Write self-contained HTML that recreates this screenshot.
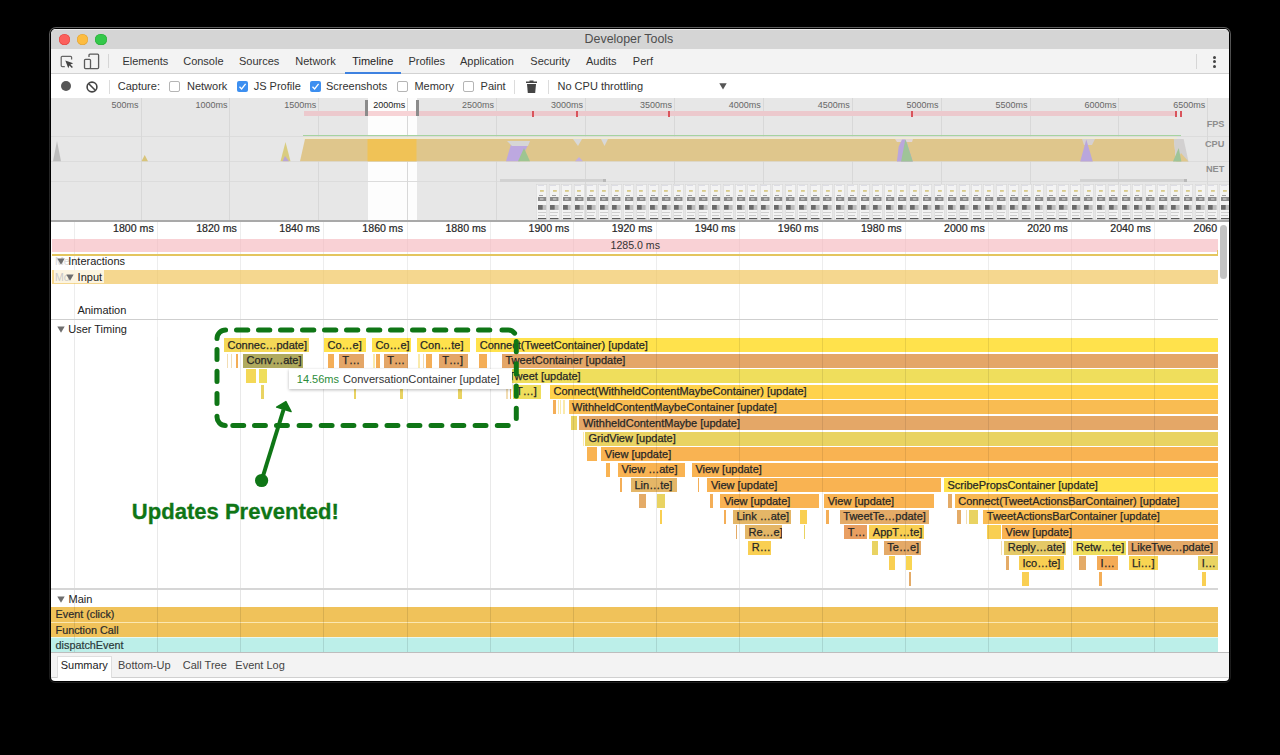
<!DOCTYPE html>
<html><head><meta charset="utf-8"><title>Developer Tools</title>
<style>
html,body{margin:0;padding:0;background:#000;}
body{width:1280px;height:755px;position:relative;overflow:hidden;font-family:"Liberation Sans", sans-serif;}
body div, body svg{position:absolute;}
.t{white-space:pre;}
.b{overflow:hidden;}
.b span{position:absolute;left:3.5px;top:1.6px;font-size:11px;line-height:11px;color:#262626;white-space:pre;-webkit-text-stroke:0.25px #262626;}
</style></head><body>
<div style="left:49px;top:27px;width:1182px;height:656px;background:linear-gradient(#5e5e5e 0,#4a4a4a 5%,#262626 14%,#1c1c1c 100%);border-radius:7px 7px 6px 6px"></div>
<div style="left:50px;top:28px;width:1180px;height:654px;background:#000;border-radius:6px 6px 5px 5px"></div>
<div style="left:51px;top:29px;width:1178px;height:652px;background:#fff;border-radius:5px 5px 4px 4px;overflow:hidden"><div style="left:0;top:0;width:100%;height:20px;background:#d5d5d5;border-top:1px solid #ececec;box-sizing:border-box"></div></div>
<div style="left:58.70px;top:33.80px;width:11.4px;height:11.4px;border-radius:50%;background:#fc605c;box-shadow:inset 0 0 0 0.5px #e0443e"></div>
<div style="left:76.90px;top:33.80px;width:11.4px;height:11.4px;border-radius:50%;background:#fdbc40;box-shadow:inset 0 0 0 0.5px #dea236"></div>
<div style="left:95.40px;top:33.80px;width:11.4px;height:11.4px;border-radius:50%;background:#34c84a;box-shadow:inset 0 0 0 0.5px #27aa35"></div>
<div class="t" style="left:584.60px;top:33.26px;font-size:12.4px;line-height:12.4px;color:#4d4d4d;">Developer Tools</div>
<div style="left:51.00px;top:49.00px;width:1178.00px;height:24.00px;background:#f3f3f3;"></div>
<div style="left:51.00px;top:73.00px;width:1178.00px;height:1.30px;background:#d2d2d2;"></div>
<svg style="left:59px;top:54px" width="16" height="16" viewBox="0 0 16 16"><path d="M5.8 12.6H3.2C2.6 12.6 2.2 12.2 2.2 11.6V3.3C2.2 2.7 2.6 2.3 3.2 2.3H11.6C12.2 2.3 12.6 2.7 12.6 3.3V5.6" fill="none" stroke="#666" stroke-width="1.25"/><path d="M6.3 6.6L14.2 9.3L11.4 10.4L13.9 12.9L12.9 13.9L10.4 11.4L9.3 14.2Z" fill="#444"/></svg>
<svg style="left:83px;top:53px" width="17" height="17" viewBox="0 0 17 17"><path d="M6 4V2.2C6 1.6 6.4 1.2 7 1.2H14.6C15.2 1.2 15.6 1.6 15.6 2.2V14.6C15.6 15.2 15.2 15.6 14.6 15.6H7" fill="none" stroke="#5a5a5a" stroke-width="1.3"/><rect x="1.5" y="6.3" width="6" height="9.3" rx="1" fill="none" stroke="#5a5a5a" stroke-width="1.3"/></svg>
<div style="left:108.30px;top:54.00px;width:1.00px;height:14.00px;background:#d6d6d6;"></div>
<div class="t" style="left:122.40px;top:55.95px;font-size:11px;line-height:11px;color:#333;">Elements</div>
<div class="t" style="left:183.20px;top:55.95px;font-size:11px;line-height:11px;color:#333;">Console</div>
<div class="t" style="left:239.00px;top:55.95px;font-size:11px;line-height:11px;color:#333;">Sources</div>
<div class="t" style="left:295.30px;top:55.95px;font-size:11px;line-height:11px;color:#333;">Network</div>
<div class="t" style="left:352.20px;top:55.95px;font-size:11px;line-height:11px;color:#222;">Timeline</div>
<div class="t" style="left:408.40px;top:55.95px;font-size:11px;line-height:11px;color:#333;">Profiles</div>
<div class="t" style="left:460.00px;top:55.95px;font-size:11px;line-height:11px;color:#333;">Application</div>
<div class="t" style="left:530.30px;top:55.95px;font-size:11px;line-height:11px;color:#333;">Security</div>
<div class="t" style="left:586.00px;top:55.95px;font-size:11px;line-height:11px;color:#333;">Audits</div>
<div class="t" style="left:632.80px;top:55.95px;font-size:11px;line-height:11px;color:#333;">Perf</div>
<div style="left:344.70px;top:72.00px;width:56.30px;height:2.00px;background:#3e82e0;"></div>
<div style="left:1196.00px;top:54.00px;width:1.00px;height:15.00px;background:#d6d6d6;"></div>
<div style="left:1212.5px;top:55.9px;width:3px;height:3px;border-radius:50%;background:#444"></div>
<div style="left:1212.5px;top:60.4px;width:3px;height:3px;border-radius:50%;background:#444"></div>
<div style="left:1212.5px;top:64.9px;width:3px;height:3px;border-radius:50%;background:#444"></div>
<div style="left:60.6px;top:80.65px;width:10.8px;height:10.8px;border-radius:50%;background:#565656"></div>
<svg style="left:85.25px;top:79.65px" width="14" height="14" viewBox="0 0 14 14"><circle cx="7" cy="7" r="4.9" fill="none" stroke="#444" stroke-width="1.6"/><path d="M3.5 3.5L10.5 10.5" stroke="#444" stroke-width="1.6"/></svg>
<div style="left:108.50px;top:79.50px;width:1.00px;height:14.00px;background:#dcdcdc;"></div>
<div class="t" style="left:117.75px;top:80.95px;font-size:11px;line-height:11px;color:#333;">Capture:</div>
<div style="left:169.30px;top:81px;width:11px;height:11px;border-radius:2px;border:1px solid #b5b5b5;box-sizing:border-box;background:#fff"></div>
<div class="t" style="left:187.00px;top:80.95px;font-size:11px;line-height:11px;color:#333;">Network</div>
<div style="left:237.40px;top:81px;width:11px;height:11px;border-radius:2px;background:#3d8ff0"></div><svg style="left:237.40px;top:81px" width="11" height="11" viewBox="0 0 11 11"><path d="M2.5 5.8L4.6 8L8.6 2.8" fill="none" stroke="#fff" stroke-width="1.3"/></svg>
<div class="t" style="left:253.70px;top:80.95px;font-size:11px;line-height:11px;color:#333;">JS Profile</div>
<div style="left:310.00px;top:81px;width:11px;height:11px;border-radius:2px;background:#3d8ff0"></div><svg style="left:310.00px;top:81px" width="11" height="11" viewBox="0 0 11 11"><path d="M2.5 5.8L4.6 8L8.6 2.8" fill="none" stroke="#fff" stroke-width="1.3"/></svg>
<div class="t" style="left:326.00px;top:80.95px;font-size:11px;line-height:11px;color:#333;">Screenshots</div>
<div style="left:397.20px;top:81px;width:11px;height:11px;border-radius:2px;border:1px solid #b5b5b5;box-sizing:border-box;background:#fff"></div>
<div class="t" style="left:414.40px;top:80.95px;font-size:11px;line-height:11px;color:#333;">Memory</div>
<div style="left:463.20px;top:81px;width:11px;height:11px;border-radius:2px;border:1px solid #b5b5b5;box-sizing:border-box;background:#fff"></div>
<div class="t" style="left:480.60px;top:80.95px;font-size:11px;line-height:11px;color:#333;">Paint</div>
<div style="left:514.40px;top:79.50px;width:1.00px;height:14.00px;background:#dcdcdc;"></div>
<svg style="left:525px;top:79px" width="13" height="15" viewBox="0 0 13 15"><path d="M4.5 1.5H8.5V2.6H12V4H1V2.6H4.5Z" fill="#444"/><path d="M2 5H11L10.2 14H2.8Z" fill="#444"/></svg>
<div style="left:548.00px;top:79.50px;width:1.00px;height:14.00px;background:#dcdcdc;"></div>
<div class="t" style="left:557.50px;top:80.95px;font-size:11px;line-height:11px;color:#333;">No CPU throttling</div>
<svg style="left:719.2px;top:83.4px" width="8" height="7" viewBox="0 0 8 7"><path d="M0.3 0.3H7.7L4 6.6Z" fill="#555"/></svg>
<div style="left:51.00px;top:98.00px;width:1178.00px;height:122.00px;background:#e7e7e7;"></div>
<div style="left:367.50px;top:98.00px;width:49.00px;height:122.00px;background:#fdfdfd;"></div>
<div style="left:51.00px;top:135.60px;width:1178.00px;height:0.80px;background:#dcdcdc;"></div>
<div style="left:51.00px;top:161.20px;width:1178.00px;height:0.80px;background:#dcdcdc;"></div>
<div style="left:51.00px;top:181.20px;width:1178.00px;height:0.80px;background:#dcdcdc;"></div>
<div style="left:140.50px;top:98.00px;width:1.00px;height:122.00px;background:#d8d8d8;"></div>
<div style="left:229.40px;top:98.00px;width:1.00px;height:122.00px;background:#d8d8d8;"></div>
<div style="left:318.30px;top:98.00px;width:1.00px;height:122.00px;background:#d8d8d8;"></div>
<div style="left:407.20px;top:98.00px;width:1.00px;height:122.00px;background:#d8d8d8;"></div>
<div style="left:496.10px;top:98.00px;width:1.00px;height:122.00px;background:#d8d8d8;"></div>
<div style="left:585.00px;top:98.00px;width:1.00px;height:122.00px;background:#d8d8d8;"></div>
<div style="left:673.90px;top:98.00px;width:1.00px;height:122.00px;background:#d8d8d8;"></div>
<div style="left:762.80px;top:98.00px;width:1.00px;height:122.00px;background:#d8d8d8;"></div>
<div style="left:851.70px;top:98.00px;width:1.00px;height:122.00px;background:#d8d8d8;"></div>
<div style="left:940.60px;top:98.00px;width:1.00px;height:122.00px;background:#d8d8d8;"></div>
<div style="left:1029.50px;top:98.00px;width:1.00px;height:122.00px;background:#d8d8d8;"></div>
<div style="left:1118.40px;top:98.00px;width:1.00px;height:122.00px;background:#d8d8d8;"></div>
<div style="left:1207.30px;top:98.00px;width:1.00px;height:122.00px;background:#d8d8d8;"></div>
<div class="t" style="right:1141.50px;top:100.65px;font-size:9px;line-height:9px;color:#666;text-align:right;">500ms</div>
<div class="t" style="right:1052.60px;top:100.65px;font-size:9px;line-height:9px;color:#666;text-align:right;">1000ms</div>
<div class="t" style="right:963.70px;top:100.65px;font-size:9px;line-height:9px;color:#666;text-align:right;">1500ms</div>
<div class="t" style="right:874.80px;top:100.65px;font-size:9px;line-height:9px;color:#222;text-align:right;">2000ms</div>
<div class="t" style="right:785.90px;top:100.65px;font-size:9px;line-height:9px;color:#666;text-align:right;">2500ms</div>
<div class="t" style="right:697.00px;top:100.65px;font-size:9px;line-height:9px;color:#666;text-align:right;">3000ms</div>
<div class="t" style="right:608.10px;top:100.65px;font-size:9px;line-height:9px;color:#666;text-align:right;">3500ms</div>
<div class="t" style="right:519.20px;top:100.65px;font-size:9px;line-height:9px;color:#666;text-align:right;">4000ms</div>
<div class="t" style="right:430.30px;top:100.65px;font-size:9px;line-height:9px;color:#666;text-align:right;">4500ms</div>
<div class="t" style="right:341.40px;top:100.65px;font-size:9px;line-height:9px;color:#666;text-align:right;">5000ms</div>
<div class="t" style="right:252.50px;top:100.65px;font-size:9px;line-height:9px;color:#666;text-align:right;">5500ms</div>
<div class="t" style="right:163.60px;top:100.65px;font-size:9px;line-height:9px;color:#666;text-align:right;">6000ms</div>
<div class="t" style="right:74.70px;top:100.65px;font-size:9px;line-height:9px;color:#666;text-align:right;">6500ms</div>
<div style="left:304.00px;top:111.20px;width:873.00px;height:5.20px;background:#ecc9cd;"></div>
<div style="left:368.00px;top:111.20px;width:48.00px;height:5.20px;background:#f7d3d6;"></div>
<div style="left:532.00px;top:110.50px;width:2.00px;height:6.50px;background:#d9545c;"></div>
<div style="left:575.50px;top:110.50px;width:2.00px;height:6.50px;background:#d9545c;"></div>
<div style="left:667.50px;top:110.50px;width:2.00px;height:6.50px;background:#d9545c;"></div>
<div style="left:910.50px;top:110.50px;width:2.00px;height:6.50px;background:#d9545c;"></div>
<div style="left:1175.00px;top:110.50px;width:2.00px;height:6.50px;background:#d9545c;"></div>
<div style="left:1179.50px;top:110.50px;width:2.00px;height:6.50px;background:#d9545c;"></div>
<div style="left:303.00px;top:135.30px;width:878.00px;height:1.10px;background:#a6d3a0;"></div>
<div style="left:303.00px;top:136.60px;width:874.00px;height:2.00px;background:#eeebd6;"></div>
<svg style="left:51px;top:136px" width="1178" height="27" viewBox="51 136 1178 27"><path d="M300 161.3L305 139H1174L1176 161.3Z" fill="#dfc68c"/><path d="M367.5 161.3V139H416.5V161.3Z" fill="#f0c256"/><path d="M53 161.3L57 141L61 161.3Z" fill="#bdbdbd"/><path d="M141.5 161.3L144.7 155L148 161.3Z" fill="#d8c47a"/><path d="M280.5 161.3L285.5 142L290.5 161.3Z" fill="#d9cc80"/><path d="M282.5 161.3L285 156L289 161.3Z" fill="#b9a6d6"/><path d="M506 161.3L512 141H530L520 161.3Z" fill="#bda8e0"/><path d="M518 161.3L524 148L530 161.3Z" fill="#9ec591"/><path d="M507 141H530L528 146H512Z" fill="#d6d6d6"/><path d="M573 139H582L578 146Z" fill="#d8d8d8"/><path d="M575 161.3L579 157L583 161.3Z" fill="#c3b0de"/><path d="M601 139H608L604.5 146Z" fill="#d8d8d8"/><path d="M895 139L913 139L912 142L897 142Z" fill="#e2d6d6"/><path d="M896.9 161.4L898.7 146.4L902 139.4H905.3L907 143L912.8 161.4Z" fill="#b9a6dc"/><path d="M901.1 161.4L905.3 139.6L906.7 142.7L912.8 161.4Z" fill="#9fc498"/><path d="M1082 139H1095L1092 145H1084Z" fill="#d6d0d0"/><path d="M1080.2 161.4L1086.3 139.5L1092.8 161.4Z" fill="#b9a6dc"/><path d="M1173.8 139H1183.6L1188.5 161.4H1176Z" fill="#d2d0d0"/><path d="M1176 161.4L1181 153L1188.5 161.4Z" fill="#e0c88c"/><path d="M1173 161.4L1178.7 148L1181.4 161.4Z" fill="#9fc498"/></svg>
<div style="left:500.00px;top:178.50px;width:103.00px;height:3.00px;background:#d2d2d2;"></div>
<div style="left:603.00px;top:178.50px;width:3.00px;height:3.00px;background:#b8b8b8;"></div>
<div style="left:1080.00px;top:178.50px;width:104.00px;height:3.00px;background:#d2d2d2;"></div>
<div style="left:1184.00px;top:178.50px;width:3.00px;height:3.00px;background:#b8b8b8;"></div>
<div class="t" style="right:55.50px;top:120.08px;font-size:9.2px;line-height:9.2px;color:#8e8e8e;font-weight:700;text-align:right;">FPS</div>
<div class="t" style="right:55.70px;top:140.18px;font-size:9.2px;line-height:9.2px;color:#8e8e8e;font-weight:700;text-align:right;">CPU</div>
<div class="t" style="right:55.70px;top:165.18px;font-size:9.2px;line-height:9.2px;color:#8e8e8e;font-weight:700;text-align:right;">NET</div>
<div style="left:51px;top:180px;width:1178px;height:41px;overflow:hidden">
<div style="left:485.30px;top:4.2px;width:11px;height:36px;background-color:#f3f3f3;background-image:linear-gradient(#5a5a5a,#5a5a5a),linear-gradient(#c9c9c9,#c9c9c9),linear-gradient(#cfcfcf,#cfcfcf),linear-gradient(#6a6a6a,#6a6a6a),linear-gradient(#bdbdbd,#bdbdbd),linear-gradient(#b4b4b4,#b4b4b4),linear-gradient(#8a8a8a,#8a8a8a),linear-gradient(#a0a0a0,#a0a0a0),linear-gradient(#d8ca88,#d8ca88),linear-gradient(#dcdce4,#dcdce4);background-position:1.5px 33.4px,1.5px 30.6px,1.5px 27.8px,1.5px 20.8px,6.3px 20.6px,4px 13.8px,1.5px 12.8px,3px 10.6px,3.8px 5.8px,1.5px 1.2px;background-size:8.5px 1.6px,7px 1px,8px 1px,4.8px 4.8px,3.7px 5px,3.5px 2px,8.5px 4.2px,4px 1px,3.8px 1.8px,6px 1px;background-repeat:no-repeat;box-shadow:inset 0 0 0 0.7px #d9d9d9"></div>
<div style="left:497.72px;top:4.2px;width:11px;height:36px;background-color:#f3f3f3;background-image:linear-gradient(#5a5a5a,#5a5a5a),linear-gradient(#c9c9c9,#c9c9c9),linear-gradient(#cfcfcf,#cfcfcf),linear-gradient(#6a6a6a,#6a6a6a),linear-gradient(#bdbdbd,#bdbdbd),linear-gradient(#b4b4b4,#b4b4b4),linear-gradient(#8a8a8a,#8a8a8a),linear-gradient(#a0a0a0,#a0a0a0),linear-gradient(#d8ca88,#d8ca88),linear-gradient(#dcdce4,#dcdce4);background-position:1.5px 33.4px,1.5px 30.6px,1.5px 27.8px,1.5px 20.8px,6.3px 20.6px,4px 13.8px,1.5px 12.8px,3px 10.6px,3.8px 5.8px,1.5px 1.2px;background-size:8.5px 1.6px,7px 1px,8px 1px,4.8px 4.8px,3.7px 5px,3.5px 2px,8.5px 4.2px,4px 1px,3.8px 1.8px,6px 1px;background-repeat:no-repeat;box-shadow:inset 0 0 0 0.7px #d9d9d9"></div>
<div style="left:510.14px;top:4.2px;width:11px;height:36px;background-color:#f3f3f3;background-image:linear-gradient(#5a5a5a,#5a5a5a),linear-gradient(#c9c9c9,#c9c9c9),linear-gradient(#cfcfcf,#cfcfcf),linear-gradient(#6a6a6a,#6a6a6a),linear-gradient(#bdbdbd,#bdbdbd),linear-gradient(#b4b4b4,#b4b4b4),linear-gradient(#8a8a8a,#8a8a8a),linear-gradient(#a0a0a0,#a0a0a0),linear-gradient(#d8ca88,#d8ca88),linear-gradient(#dcdce4,#dcdce4);background-position:1.5px 33.4px,1.5px 30.6px,1.5px 27.8px,1.5px 20.8px,6.3px 20.6px,4px 13.8px,1.5px 12.8px,3px 10.6px,3.8px 5.8px,1.5px 1.2px;background-size:8.5px 1.6px,7px 1px,8px 1px,4.8px 4.8px,3.7px 5px,3.5px 2px,8.5px 4.2px,4px 1px,3.8px 1.8px,6px 1px;background-repeat:no-repeat;box-shadow:inset 0 0 0 0.7px #d9d9d9"></div>
<div style="left:522.56px;top:4.2px;width:11px;height:36px;background-color:#f3f3f3;background-image:linear-gradient(#5a5a5a,#5a5a5a),linear-gradient(#c9c9c9,#c9c9c9),linear-gradient(#cfcfcf,#cfcfcf),linear-gradient(#6a6a6a,#6a6a6a),linear-gradient(#bdbdbd,#bdbdbd),linear-gradient(#b4b4b4,#b4b4b4),linear-gradient(#8a8a8a,#8a8a8a),linear-gradient(#a0a0a0,#a0a0a0),linear-gradient(#d8ca88,#d8ca88),linear-gradient(#dcdce4,#dcdce4);background-position:1.5px 33.4px,1.5px 30.6px,1.5px 27.8px,1.5px 20.8px,6.3px 20.6px,4px 13.8px,1.5px 12.8px,3px 10.6px,3.8px 5.8px,1.5px 1.2px;background-size:8.5px 1.6px,7px 1px,8px 1px,4.8px 4.8px,3.7px 5px,3.5px 2px,8.5px 4.2px,4px 1px,3.8px 1.8px,6px 1px;background-repeat:no-repeat;box-shadow:inset 0 0 0 0.7px #d9d9d9"></div>
<div style="left:534.98px;top:4.2px;width:11px;height:36px;background-color:#f3f3f3;background-image:linear-gradient(#5a5a5a,#5a5a5a),linear-gradient(#c9c9c9,#c9c9c9),linear-gradient(#cfcfcf,#cfcfcf),linear-gradient(#6a6a6a,#6a6a6a),linear-gradient(#bdbdbd,#bdbdbd),linear-gradient(#b4b4b4,#b4b4b4),linear-gradient(#8a8a8a,#8a8a8a),linear-gradient(#a0a0a0,#a0a0a0),linear-gradient(#d8ca88,#d8ca88),linear-gradient(#dcdce4,#dcdce4);background-position:1.5px 33.4px,1.5px 30.6px,1.5px 27.8px,1.5px 20.8px,6.3px 20.6px,4px 13.8px,1.5px 12.8px,3px 10.6px,3.8px 5.8px,1.5px 1.2px;background-size:8.5px 1.6px,7px 1px,8px 1px,4.8px 4.8px,3.7px 5px,3.5px 2px,8.5px 4.2px,4px 1px,3.8px 1.8px,6px 1px;background-repeat:no-repeat;box-shadow:inset 0 0 0 0.7px #d9d9d9"></div>
<div style="left:547.40px;top:4.2px;width:11px;height:36px;background-color:#f3f3f3;background-image:linear-gradient(#5a5a5a,#5a5a5a),linear-gradient(#c9c9c9,#c9c9c9),linear-gradient(#cfcfcf,#cfcfcf),linear-gradient(#6a6a6a,#6a6a6a),linear-gradient(#bdbdbd,#bdbdbd),linear-gradient(#b4b4b4,#b4b4b4),linear-gradient(#8a8a8a,#8a8a8a),linear-gradient(#a0a0a0,#a0a0a0),linear-gradient(#d8ca88,#d8ca88),linear-gradient(#dcdce4,#dcdce4);background-position:1.5px 33.4px,1.5px 30.6px,1.5px 27.8px,1.5px 20.8px,6.3px 20.6px,4px 13.8px,1.5px 12.8px,3px 10.6px,3.8px 5.8px,1.5px 1.2px;background-size:8.5px 1.6px,7px 1px,8px 1px,4.8px 4.8px,3.7px 5px,3.5px 2px,8.5px 4.2px,4px 1px,3.8px 1.8px,6px 1px;background-repeat:no-repeat;box-shadow:inset 0 0 0 0.7px #d9d9d9"></div>
<div style="left:559.82px;top:4.2px;width:11px;height:36px;background-color:#f3f3f3;background-image:linear-gradient(#5a5a5a,#5a5a5a),linear-gradient(#c9c9c9,#c9c9c9),linear-gradient(#cfcfcf,#cfcfcf),linear-gradient(#6a6a6a,#6a6a6a),linear-gradient(#bdbdbd,#bdbdbd),linear-gradient(#b4b4b4,#b4b4b4),linear-gradient(#8a8a8a,#8a8a8a),linear-gradient(#a0a0a0,#a0a0a0),linear-gradient(#d8ca88,#d8ca88),linear-gradient(#dcdce4,#dcdce4);background-position:1.5px 33.4px,1.5px 30.6px,1.5px 27.8px,1.5px 20.8px,6.3px 20.6px,4px 13.8px,1.5px 12.8px,3px 10.6px,3.8px 5.8px,1.5px 1.2px;background-size:8.5px 1.6px,7px 1px,8px 1px,4.8px 4.8px,3.7px 5px,3.5px 2px,8.5px 4.2px,4px 1px,3.8px 1.8px,6px 1px;background-repeat:no-repeat;box-shadow:inset 0 0 0 0.7px #d9d9d9"></div>
<div style="left:572.24px;top:4.2px;width:11px;height:36px;background-color:#f3f3f3;background-image:linear-gradient(#5a5a5a,#5a5a5a),linear-gradient(#c9c9c9,#c9c9c9),linear-gradient(#cfcfcf,#cfcfcf),linear-gradient(#6a6a6a,#6a6a6a),linear-gradient(#bdbdbd,#bdbdbd),linear-gradient(#b4b4b4,#b4b4b4),linear-gradient(#8a8a8a,#8a8a8a),linear-gradient(#a0a0a0,#a0a0a0),linear-gradient(#d8ca88,#d8ca88),linear-gradient(#dcdce4,#dcdce4);background-position:1.5px 33.4px,1.5px 30.6px,1.5px 27.8px,1.5px 20.8px,6.3px 20.6px,4px 13.8px,1.5px 12.8px,3px 10.6px,3.8px 5.8px,1.5px 1.2px;background-size:8.5px 1.6px,7px 1px,8px 1px,4.8px 4.8px,3.7px 5px,3.5px 2px,8.5px 4.2px,4px 1px,3.8px 1.8px,6px 1px;background-repeat:no-repeat;box-shadow:inset 0 0 0 0.7px #d9d9d9"></div>
<div style="left:584.66px;top:4.2px;width:11px;height:36px;background-color:#f3f3f3;background-image:linear-gradient(#5a5a5a,#5a5a5a),linear-gradient(#c9c9c9,#c9c9c9),linear-gradient(#cfcfcf,#cfcfcf),linear-gradient(#6a6a6a,#6a6a6a),linear-gradient(#bdbdbd,#bdbdbd),linear-gradient(#b4b4b4,#b4b4b4),linear-gradient(#8a8a8a,#8a8a8a),linear-gradient(#a0a0a0,#a0a0a0),linear-gradient(#d8ca88,#d8ca88),linear-gradient(#dcdce4,#dcdce4);background-position:1.5px 33.4px,1.5px 30.6px,1.5px 27.8px,1.5px 20.8px,6.3px 20.6px,4px 13.8px,1.5px 12.8px,3px 10.6px,3.8px 5.8px,1.5px 1.2px;background-size:8.5px 1.6px,7px 1px,8px 1px,4.8px 4.8px,3.7px 5px,3.5px 2px,8.5px 4.2px,4px 1px,3.8px 1.8px,6px 1px;background-repeat:no-repeat;box-shadow:inset 0 0 0 0.7px #d9d9d9"></div>
<div style="left:597.08px;top:4.2px;width:11px;height:36px;background-color:#f3f3f3;background-image:linear-gradient(#5a5a5a,#5a5a5a),linear-gradient(#c9c9c9,#c9c9c9),linear-gradient(#cfcfcf,#cfcfcf),linear-gradient(#6a6a6a,#6a6a6a),linear-gradient(#bdbdbd,#bdbdbd),linear-gradient(#b4b4b4,#b4b4b4),linear-gradient(#8a8a8a,#8a8a8a),linear-gradient(#a0a0a0,#a0a0a0),linear-gradient(#d8ca88,#d8ca88),linear-gradient(#dcdce4,#dcdce4);background-position:1.5px 33.4px,1.5px 30.6px,1.5px 27.8px,1.5px 20.8px,6.3px 20.6px,4px 13.8px,1.5px 12.8px,3px 10.6px,3.8px 5.8px,1.5px 1.2px;background-size:8.5px 1.6px,7px 1px,8px 1px,4.8px 4.8px,3.7px 5px,3.5px 2px,8.5px 4.2px,4px 1px,3.8px 1.8px,6px 1px;background-repeat:no-repeat;box-shadow:inset 0 0 0 0.7px #d9d9d9"></div>
<div style="left:609.50px;top:4.2px;width:11px;height:36px;background-color:#f3f3f3;background-image:linear-gradient(#5a5a5a,#5a5a5a),linear-gradient(#c9c9c9,#c9c9c9),linear-gradient(#cfcfcf,#cfcfcf),linear-gradient(#6a6a6a,#6a6a6a),linear-gradient(#bdbdbd,#bdbdbd),linear-gradient(#b4b4b4,#b4b4b4),linear-gradient(#8a8a8a,#8a8a8a),linear-gradient(#a0a0a0,#a0a0a0),linear-gradient(#d8ca88,#d8ca88),linear-gradient(#dcdce4,#dcdce4);background-position:1.5px 33.4px,1.5px 30.6px,1.5px 27.8px,1.5px 20.8px,6.3px 20.6px,4px 13.8px,1.5px 12.8px,3px 10.6px,3.8px 5.8px,1.5px 1.2px;background-size:8.5px 1.6px,7px 1px,8px 1px,4.8px 4.8px,3.7px 5px,3.5px 2px,8.5px 4.2px,4px 1px,3.8px 1.8px,6px 1px;background-repeat:no-repeat;box-shadow:inset 0 0 0 0.7px #d9d9d9"></div>
<div style="left:621.92px;top:4.2px;width:11px;height:36px;background-color:#f3f3f3;background-image:linear-gradient(#5a5a5a,#5a5a5a),linear-gradient(#c9c9c9,#c9c9c9),linear-gradient(#cfcfcf,#cfcfcf),linear-gradient(#6a6a6a,#6a6a6a),linear-gradient(#bdbdbd,#bdbdbd),linear-gradient(#b4b4b4,#b4b4b4),linear-gradient(#8a8a8a,#8a8a8a),linear-gradient(#a0a0a0,#a0a0a0),linear-gradient(#d8ca88,#d8ca88),linear-gradient(#dcdce4,#dcdce4);background-position:1.5px 33.4px,1.5px 30.6px,1.5px 27.8px,1.5px 20.8px,6.3px 20.6px,4px 13.8px,1.5px 12.8px,3px 10.6px,3.8px 5.8px,1.5px 1.2px;background-size:8.5px 1.6px,7px 1px,8px 1px,4.8px 4.8px,3.7px 5px,3.5px 2px,8.5px 4.2px,4px 1px,3.8px 1.8px,6px 1px;background-repeat:no-repeat;box-shadow:inset 0 0 0 0.7px #d9d9d9"></div>
<div style="left:634.34px;top:4.2px;width:11px;height:36px;background-color:#f3f3f3;background-image:linear-gradient(#5a5a5a,#5a5a5a),linear-gradient(#c9c9c9,#c9c9c9),linear-gradient(#cfcfcf,#cfcfcf),linear-gradient(#6a6a6a,#6a6a6a),linear-gradient(#bdbdbd,#bdbdbd),linear-gradient(#b4b4b4,#b4b4b4),linear-gradient(#8a8a8a,#8a8a8a),linear-gradient(#a0a0a0,#a0a0a0),linear-gradient(#d8ca88,#d8ca88),linear-gradient(#dcdce4,#dcdce4);background-position:1.5px 33.4px,1.5px 30.6px,1.5px 27.8px,1.5px 20.8px,6.3px 20.6px,4px 13.8px,1.5px 12.8px,3px 10.6px,3.8px 5.8px,1.5px 1.2px;background-size:8.5px 1.6px,7px 1px,8px 1px,4.8px 4.8px,3.7px 5px,3.5px 2px,8.5px 4.2px,4px 1px,3.8px 1.8px,6px 1px;background-repeat:no-repeat;box-shadow:inset 0 0 0 0.7px #d9d9d9"></div>
<div style="left:646.76px;top:4.2px;width:11px;height:36px;background-color:#f3f3f3;background-image:linear-gradient(#5a5a5a,#5a5a5a),linear-gradient(#c9c9c9,#c9c9c9),linear-gradient(#cfcfcf,#cfcfcf),linear-gradient(#6a6a6a,#6a6a6a),linear-gradient(#bdbdbd,#bdbdbd),linear-gradient(#b4b4b4,#b4b4b4),linear-gradient(#8a8a8a,#8a8a8a),linear-gradient(#a0a0a0,#a0a0a0),linear-gradient(#d8ca88,#d8ca88),linear-gradient(#dcdce4,#dcdce4);background-position:1.5px 33.4px,1.5px 30.6px,1.5px 27.8px,1.5px 20.8px,6.3px 20.6px,4px 13.8px,1.5px 12.8px,3px 10.6px,3.8px 5.8px,1.5px 1.2px;background-size:8.5px 1.6px,7px 1px,8px 1px,4.8px 4.8px,3.7px 5px,3.5px 2px,8.5px 4.2px,4px 1px,3.8px 1.8px,6px 1px;background-repeat:no-repeat;box-shadow:inset 0 0 0 0.7px #d9d9d9"></div>
<div style="left:659.18px;top:4.2px;width:11px;height:36px;background-color:#f3f3f3;background-image:linear-gradient(#5a5a5a,#5a5a5a),linear-gradient(#c9c9c9,#c9c9c9),linear-gradient(#cfcfcf,#cfcfcf),linear-gradient(#6a6a6a,#6a6a6a),linear-gradient(#bdbdbd,#bdbdbd),linear-gradient(#b4b4b4,#b4b4b4),linear-gradient(#8a8a8a,#8a8a8a),linear-gradient(#a0a0a0,#a0a0a0),linear-gradient(#d8ca88,#d8ca88),linear-gradient(#dcdce4,#dcdce4);background-position:1.5px 33.4px,1.5px 30.6px,1.5px 27.8px,1.5px 20.8px,6.3px 20.6px,4px 13.8px,1.5px 12.8px,3px 10.6px,3.8px 5.8px,1.5px 1.2px;background-size:8.5px 1.6px,7px 1px,8px 1px,4.8px 4.8px,3.7px 5px,3.5px 2px,8.5px 4.2px,4px 1px,3.8px 1.8px,6px 1px;background-repeat:no-repeat;box-shadow:inset 0 0 0 0.7px #d9d9d9"></div>
<div style="left:671.60px;top:4.2px;width:11px;height:36px;background-color:#f3f3f3;background-image:linear-gradient(#5a5a5a,#5a5a5a),linear-gradient(#c9c9c9,#c9c9c9),linear-gradient(#cfcfcf,#cfcfcf),linear-gradient(#6a6a6a,#6a6a6a),linear-gradient(#bdbdbd,#bdbdbd),linear-gradient(#b4b4b4,#b4b4b4),linear-gradient(#8a8a8a,#8a8a8a),linear-gradient(#a0a0a0,#a0a0a0),linear-gradient(#d8ca88,#d8ca88),linear-gradient(#dcdce4,#dcdce4);background-position:1.5px 33.4px,1.5px 30.6px,1.5px 27.8px,1.5px 20.8px,6.3px 20.6px,4px 13.8px,1.5px 12.8px,3px 10.6px,3.8px 5.8px,1.5px 1.2px;background-size:8.5px 1.6px,7px 1px,8px 1px,4.8px 4.8px,3.7px 5px,3.5px 2px,8.5px 4.2px,4px 1px,3.8px 1.8px,6px 1px;background-repeat:no-repeat;box-shadow:inset 0 0 0 0.7px #d9d9d9"></div>
<div style="left:684.02px;top:4.2px;width:11px;height:36px;background-color:#f3f3f3;background-image:linear-gradient(#5a5a5a,#5a5a5a),linear-gradient(#c9c9c9,#c9c9c9),linear-gradient(#cfcfcf,#cfcfcf),linear-gradient(#6a6a6a,#6a6a6a),linear-gradient(#bdbdbd,#bdbdbd),linear-gradient(#b4b4b4,#b4b4b4),linear-gradient(#8a8a8a,#8a8a8a),linear-gradient(#a0a0a0,#a0a0a0),linear-gradient(#d8ca88,#d8ca88),linear-gradient(#dcdce4,#dcdce4);background-position:1.5px 33.4px,1.5px 30.6px,1.5px 27.8px,1.5px 20.8px,6.3px 20.6px,4px 13.8px,1.5px 12.8px,3px 10.6px,3.8px 5.8px,1.5px 1.2px;background-size:8.5px 1.6px,7px 1px,8px 1px,4.8px 4.8px,3.7px 5px,3.5px 2px,8.5px 4.2px,4px 1px,3.8px 1.8px,6px 1px;background-repeat:no-repeat;box-shadow:inset 0 0 0 0.7px #d9d9d9"></div>
<div style="left:696.44px;top:4.2px;width:11px;height:36px;background-color:#f3f3f3;background-image:linear-gradient(#5a5a5a,#5a5a5a),linear-gradient(#c9c9c9,#c9c9c9),linear-gradient(#cfcfcf,#cfcfcf),linear-gradient(#6a6a6a,#6a6a6a),linear-gradient(#bdbdbd,#bdbdbd),linear-gradient(#b4b4b4,#b4b4b4),linear-gradient(#8a8a8a,#8a8a8a),linear-gradient(#a0a0a0,#a0a0a0),linear-gradient(#d8ca88,#d8ca88),linear-gradient(#dcdce4,#dcdce4);background-position:1.5px 33.4px,1.5px 30.6px,1.5px 27.8px,1.5px 20.8px,6.3px 20.6px,4px 13.8px,1.5px 12.8px,3px 10.6px,3.8px 5.8px,1.5px 1.2px;background-size:8.5px 1.6px,7px 1px,8px 1px,4.8px 4.8px,3.7px 5px,3.5px 2px,8.5px 4.2px,4px 1px,3.8px 1.8px,6px 1px;background-repeat:no-repeat;box-shadow:inset 0 0 0 0.7px #d9d9d9"></div>
<div style="left:708.86px;top:4.2px;width:11px;height:36px;background-color:#f3f3f3;background-image:linear-gradient(#5a5a5a,#5a5a5a),linear-gradient(#c9c9c9,#c9c9c9),linear-gradient(#cfcfcf,#cfcfcf),linear-gradient(#6a6a6a,#6a6a6a),linear-gradient(#bdbdbd,#bdbdbd),linear-gradient(#b4b4b4,#b4b4b4),linear-gradient(#8a8a8a,#8a8a8a),linear-gradient(#a0a0a0,#a0a0a0),linear-gradient(#d8ca88,#d8ca88),linear-gradient(#dcdce4,#dcdce4);background-position:1.5px 33.4px,1.5px 30.6px,1.5px 27.8px,1.5px 20.8px,6.3px 20.6px,4px 13.8px,1.5px 12.8px,3px 10.6px,3.8px 5.8px,1.5px 1.2px;background-size:8.5px 1.6px,7px 1px,8px 1px,4.8px 4.8px,3.7px 5px,3.5px 2px,8.5px 4.2px,4px 1px,3.8px 1.8px,6px 1px;background-repeat:no-repeat;box-shadow:inset 0 0 0 0.7px #d9d9d9"></div>
<div style="left:721.28px;top:4.2px;width:11px;height:36px;background-color:#f3f3f3;background-image:linear-gradient(#5a5a5a,#5a5a5a),linear-gradient(#c9c9c9,#c9c9c9),linear-gradient(#cfcfcf,#cfcfcf),linear-gradient(#6a6a6a,#6a6a6a),linear-gradient(#bdbdbd,#bdbdbd),linear-gradient(#b4b4b4,#b4b4b4),linear-gradient(#8a8a8a,#8a8a8a),linear-gradient(#a0a0a0,#a0a0a0),linear-gradient(#d8ca88,#d8ca88),linear-gradient(#dcdce4,#dcdce4);background-position:1.5px 33.4px,1.5px 30.6px,1.5px 27.8px,1.5px 20.8px,6.3px 20.6px,4px 13.8px,1.5px 12.8px,3px 10.6px,3.8px 5.8px,1.5px 1.2px;background-size:8.5px 1.6px,7px 1px,8px 1px,4.8px 4.8px,3.7px 5px,3.5px 2px,8.5px 4.2px,4px 1px,3.8px 1.8px,6px 1px;background-repeat:no-repeat;box-shadow:inset 0 0 0 0.7px #d9d9d9"></div>
<div style="left:733.70px;top:4.2px;width:11px;height:36px;background-color:#f3f3f3;background-image:linear-gradient(#5a5a5a,#5a5a5a),linear-gradient(#c9c9c9,#c9c9c9),linear-gradient(#cfcfcf,#cfcfcf),linear-gradient(#6a6a6a,#6a6a6a),linear-gradient(#bdbdbd,#bdbdbd),linear-gradient(#b4b4b4,#b4b4b4),linear-gradient(#8a8a8a,#8a8a8a),linear-gradient(#a0a0a0,#a0a0a0),linear-gradient(#d8ca88,#d8ca88),linear-gradient(#dcdce4,#dcdce4);background-position:1.5px 33.4px,1.5px 30.6px,1.5px 27.8px,1.5px 20.8px,6.3px 20.6px,4px 13.8px,1.5px 12.8px,3px 10.6px,3.8px 5.8px,1.5px 1.2px;background-size:8.5px 1.6px,7px 1px,8px 1px,4.8px 4.8px,3.7px 5px,3.5px 2px,8.5px 4.2px,4px 1px,3.8px 1.8px,6px 1px;background-repeat:no-repeat;box-shadow:inset 0 0 0 0.7px #d9d9d9"></div>
<div style="left:746.12px;top:4.2px;width:11px;height:36px;background-color:#f3f3f3;background-image:linear-gradient(#5a5a5a,#5a5a5a),linear-gradient(#c9c9c9,#c9c9c9),linear-gradient(#cfcfcf,#cfcfcf),linear-gradient(#6a6a6a,#6a6a6a),linear-gradient(#bdbdbd,#bdbdbd),linear-gradient(#b4b4b4,#b4b4b4),linear-gradient(#8a8a8a,#8a8a8a),linear-gradient(#a0a0a0,#a0a0a0),linear-gradient(#d8ca88,#d8ca88),linear-gradient(#dcdce4,#dcdce4);background-position:1.5px 33.4px,1.5px 30.6px,1.5px 27.8px,1.5px 20.8px,6.3px 20.6px,4px 13.8px,1.5px 12.8px,3px 10.6px,3.8px 5.8px,1.5px 1.2px;background-size:8.5px 1.6px,7px 1px,8px 1px,4.8px 4.8px,3.7px 5px,3.5px 2px,8.5px 4.2px,4px 1px,3.8px 1.8px,6px 1px;background-repeat:no-repeat;box-shadow:inset 0 0 0 0.7px #d9d9d9"></div>
<div style="left:758.54px;top:4.2px;width:11px;height:36px;background-color:#f3f3f3;background-image:linear-gradient(#5a5a5a,#5a5a5a),linear-gradient(#c9c9c9,#c9c9c9),linear-gradient(#cfcfcf,#cfcfcf),linear-gradient(#6a6a6a,#6a6a6a),linear-gradient(#bdbdbd,#bdbdbd),linear-gradient(#b4b4b4,#b4b4b4),linear-gradient(#8a8a8a,#8a8a8a),linear-gradient(#a0a0a0,#a0a0a0),linear-gradient(#d8ca88,#d8ca88),linear-gradient(#dcdce4,#dcdce4);background-position:1.5px 33.4px,1.5px 30.6px,1.5px 27.8px,1.5px 20.8px,6.3px 20.6px,4px 13.8px,1.5px 12.8px,3px 10.6px,3.8px 5.8px,1.5px 1.2px;background-size:8.5px 1.6px,7px 1px,8px 1px,4.8px 4.8px,3.7px 5px,3.5px 2px,8.5px 4.2px,4px 1px,3.8px 1.8px,6px 1px;background-repeat:no-repeat;box-shadow:inset 0 0 0 0.7px #d9d9d9"></div>
<div style="left:770.96px;top:4.2px;width:11px;height:36px;background-color:#f3f3f3;background-image:linear-gradient(#5a5a5a,#5a5a5a),linear-gradient(#c9c9c9,#c9c9c9),linear-gradient(#cfcfcf,#cfcfcf),linear-gradient(#6a6a6a,#6a6a6a),linear-gradient(#bdbdbd,#bdbdbd),linear-gradient(#b4b4b4,#b4b4b4),linear-gradient(#8a8a8a,#8a8a8a),linear-gradient(#a0a0a0,#a0a0a0),linear-gradient(#d8ca88,#d8ca88),linear-gradient(#dcdce4,#dcdce4);background-position:1.5px 33.4px,1.5px 30.6px,1.5px 27.8px,1.5px 20.8px,6.3px 20.6px,4px 13.8px,1.5px 12.8px,3px 10.6px,3.8px 5.8px,1.5px 1.2px;background-size:8.5px 1.6px,7px 1px,8px 1px,4.8px 4.8px,3.7px 5px,3.5px 2px,8.5px 4.2px,4px 1px,3.8px 1.8px,6px 1px;background-repeat:no-repeat;box-shadow:inset 0 0 0 0.7px #d9d9d9"></div>
<div style="left:783.38px;top:4.2px;width:11px;height:36px;background-color:#f3f3f3;background-image:linear-gradient(#5a5a5a,#5a5a5a),linear-gradient(#c9c9c9,#c9c9c9),linear-gradient(#cfcfcf,#cfcfcf),linear-gradient(#6a6a6a,#6a6a6a),linear-gradient(#bdbdbd,#bdbdbd),linear-gradient(#b4b4b4,#b4b4b4),linear-gradient(#8a8a8a,#8a8a8a),linear-gradient(#a0a0a0,#a0a0a0),linear-gradient(#d8ca88,#d8ca88),linear-gradient(#dcdce4,#dcdce4);background-position:1.5px 33.4px,1.5px 30.6px,1.5px 27.8px,1.5px 20.8px,6.3px 20.6px,4px 13.8px,1.5px 12.8px,3px 10.6px,3.8px 5.8px,1.5px 1.2px;background-size:8.5px 1.6px,7px 1px,8px 1px,4.8px 4.8px,3.7px 5px,3.5px 2px,8.5px 4.2px,4px 1px,3.8px 1.8px,6px 1px;background-repeat:no-repeat;box-shadow:inset 0 0 0 0.7px #d9d9d9"></div>
<div style="left:795.80px;top:4.2px;width:11px;height:36px;background-color:#f3f3f3;background-image:linear-gradient(#5a5a5a,#5a5a5a),linear-gradient(#c9c9c9,#c9c9c9),linear-gradient(#cfcfcf,#cfcfcf),linear-gradient(#6a6a6a,#6a6a6a),linear-gradient(#bdbdbd,#bdbdbd),linear-gradient(#b4b4b4,#b4b4b4),linear-gradient(#8a8a8a,#8a8a8a),linear-gradient(#a0a0a0,#a0a0a0),linear-gradient(#d8ca88,#d8ca88),linear-gradient(#dcdce4,#dcdce4);background-position:1.5px 33.4px,1.5px 30.6px,1.5px 27.8px,1.5px 20.8px,6.3px 20.6px,4px 13.8px,1.5px 12.8px,3px 10.6px,3.8px 5.8px,1.5px 1.2px;background-size:8.5px 1.6px,7px 1px,8px 1px,4.8px 4.8px,3.7px 5px,3.5px 2px,8.5px 4.2px,4px 1px,3.8px 1.8px,6px 1px;background-repeat:no-repeat;box-shadow:inset 0 0 0 0.7px #d9d9d9"></div>
<div style="left:808.22px;top:4.2px;width:11px;height:36px;background-color:#f3f3f3;background-image:linear-gradient(#5a5a5a,#5a5a5a),linear-gradient(#c9c9c9,#c9c9c9),linear-gradient(#cfcfcf,#cfcfcf),linear-gradient(#6a6a6a,#6a6a6a),linear-gradient(#bdbdbd,#bdbdbd),linear-gradient(#b4b4b4,#b4b4b4),linear-gradient(#8a8a8a,#8a8a8a),linear-gradient(#a0a0a0,#a0a0a0),linear-gradient(#d8ca88,#d8ca88),linear-gradient(#dcdce4,#dcdce4);background-position:1.5px 33.4px,1.5px 30.6px,1.5px 27.8px,1.5px 20.8px,6.3px 20.6px,4px 13.8px,1.5px 12.8px,3px 10.6px,3.8px 5.8px,1.5px 1.2px;background-size:8.5px 1.6px,7px 1px,8px 1px,4.8px 4.8px,3.7px 5px,3.5px 2px,8.5px 4.2px,4px 1px,3.8px 1.8px,6px 1px;background-repeat:no-repeat;box-shadow:inset 0 0 0 0.7px #d9d9d9"></div>
<div style="left:820.64px;top:4.2px;width:11px;height:36px;background-color:#f3f3f3;background-image:linear-gradient(#5a5a5a,#5a5a5a),linear-gradient(#c9c9c9,#c9c9c9),linear-gradient(#cfcfcf,#cfcfcf),linear-gradient(#6a6a6a,#6a6a6a),linear-gradient(#bdbdbd,#bdbdbd),linear-gradient(#b4b4b4,#b4b4b4),linear-gradient(#8a8a8a,#8a8a8a),linear-gradient(#a0a0a0,#a0a0a0),linear-gradient(#d8ca88,#d8ca88),linear-gradient(#dcdce4,#dcdce4);background-position:1.5px 33.4px,1.5px 30.6px,1.5px 27.8px,1.5px 20.8px,6.3px 20.6px,4px 13.8px,1.5px 12.8px,3px 10.6px,3.8px 5.8px,1.5px 1.2px;background-size:8.5px 1.6px,7px 1px,8px 1px,4.8px 4.8px,3.7px 5px,3.5px 2px,8.5px 4.2px,4px 1px,3.8px 1.8px,6px 1px;background-repeat:no-repeat;box-shadow:inset 0 0 0 0.7px #d9d9d9"></div>
<div style="left:833.06px;top:4.2px;width:11px;height:36px;background-color:#f3f3f3;background-image:linear-gradient(#5a5a5a,#5a5a5a),linear-gradient(#c9c9c9,#c9c9c9),linear-gradient(#cfcfcf,#cfcfcf),linear-gradient(#6a6a6a,#6a6a6a),linear-gradient(#bdbdbd,#bdbdbd),linear-gradient(#b4b4b4,#b4b4b4),linear-gradient(#8a8a8a,#8a8a8a),linear-gradient(#a0a0a0,#a0a0a0),linear-gradient(#d8ca88,#d8ca88),linear-gradient(#dcdce4,#dcdce4);background-position:1.5px 33.4px,1.5px 30.6px,1.5px 27.8px,1.5px 20.8px,6.3px 20.6px,4px 13.8px,1.5px 12.8px,3px 10.6px,3.8px 5.8px,1.5px 1.2px;background-size:8.5px 1.6px,7px 1px,8px 1px,4.8px 4.8px,3.7px 5px,3.5px 2px,8.5px 4.2px,4px 1px,3.8px 1.8px,6px 1px;background-repeat:no-repeat;box-shadow:inset 0 0 0 0.7px #d9d9d9"></div>
<div style="left:845.48px;top:4.2px;width:11px;height:36px;background-color:#f3f3f3;background-image:linear-gradient(#5a5a5a,#5a5a5a),linear-gradient(#c9c9c9,#c9c9c9),linear-gradient(#cfcfcf,#cfcfcf),linear-gradient(#6a6a6a,#6a6a6a),linear-gradient(#bdbdbd,#bdbdbd),linear-gradient(#b4b4b4,#b4b4b4),linear-gradient(#8a8a8a,#8a8a8a),linear-gradient(#a0a0a0,#a0a0a0),linear-gradient(#d8ca88,#d8ca88),linear-gradient(#dcdce4,#dcdce4);background-position:1.5px 33.4px,1.5px 30.6px,1.5px 27.8px,1.5px 20.8px,6.3px 20.6px,4px 13.8px,1.5px 12.8px,3px 10.6px,3.8px 5.8px,1.5px 1.2px;background-size:8.5px 1.6px,7px 1px,8px 1px,4.8px 4.8px,3.7px 5px,3.5px 2px,8.5px 4.2px,4px 1px,3.8px 1.8px,6px 1px;background-repeat:no-repeat;box-shadow:inset 0 0 0 0.7px #d9d9d9"></div>
<div style="left:857.90px;top:4.2px;width:11px;height:36px;background-color:#f3f3f3;background-image:linear-gradient(#5a5a5a,#5a5a5a),linear-gradient(#c9c9c9,#c9c9c9),linear-gradient(#cfcfcf,#cfcfcf),linear-gradient(#6a6a6a,#6a6a6a),linear-gradient(#bdbdbd,#bdbdbd),linear-gradient(#b4b4b4,#b4b4b4),linear-gradient(#8a8a8a,#8a8a8a),linear-gradient(#a0a0a0,#a0a0a0),linear-gradient(#d8ca88,#d8ca88),linear-gradient(#dcdce4,#dcdce4);background-position:1.5px 33.4px,1.5px 30.6px,1.5px 27.8px,1.5px 20.8px,6.3px 20.6px,4px 13.8px,1.5px 12.8px,3px 10.6px,3.8px 5.8px,1.5px 1.2px;background-size:8.5px 1.6px,7px 1px,8px 1px,4.8px 4.8px,3.7px 5px,3.5px 2px,8.5px 4.2px,4px 1px,3.8px 1.8px,6px 1px;background-repeat:no-repeat;box-shadow:inset 0 0 0 0.7px #d9d9d9"></div>
<div style="left:870.32px;top:4.2px;width:11px;height:36px;background-color:#f3f3f3;background-image:linear-gradient(#5a5a5a,#5a5a5a),linear-gradient(#c9c9c9,#c9c9c9),linear-gradient(#cfcfcf,#cfcfcf),linear-gradient(#6a6a6a,#6a6a6a),linear-gradient(#bdbdbd,#bdbdbd),linear-gradient(#b4b4b4,#b4b4b4),linear-gradient(#8a8a8a,#8a8a8a),linear-gradient(#a0a0a0,#a0a0a0),linear-gradient(#d8ca88,#d8ca88),linear-gradient(#dcdce4,#dcdce4);background-position:1.5px 33.4px,1.5px 30.6px,1.5px 27.8px,1.5px 20.8px,6.3px 20.6px,4px 13.8px,1.5px 12.8px,3px 10.6px,3.8px 5.8px,1.5px 1.2px;background-size:8.5px 1.6px,7px 1px,8px 1px,4.8px 4.8px,3.7px 5px,3.5px 2px,8.5px 4.2px,4px 1px,3.8px 1.8px,6px 1px;background-repeat:no-repeat;box-shadow:inset 0 0 0 0.7px #d9d9d9"></div>
<div style="left:882.74px;top:4.2px;width:11px;height:36px;background-color:#f3f3f3;background-image:linear-gradient(#5a5a5a,#5a5a5a),linear-gradient(#c9c9c9,#c9c9c9),linear-gradient(#cfcfcf,#cfcfcf),linear-gradient(#6a6a6a,#6a6a6a),linear-gradient(#bdbdbd,#bdbdbd),linear-gradient(#b4b4b4,#b4b4b4),linear-gradient(#8a8a8a,#8a8a8a),linear-gradient(#a0a0a0,#a0a0a0),linear-gradient(#d8ca88,#d8ca88),linear-gradient(#dcdce4,#dcdce4);background-position:1.5px 33.4px,1.5px 30.6px,1.5px 27.8px,1.5px 20.8px,6.3px 20.6px,4px 13.8px,1.5px 12.8px,3px 10.6px,3.8px 5.8px,1.5px 1.2px;background-size:8.5px 1.6px,7px 1px,8px 1px,4.8px 4.8px,3.7px 5px,3.5px 2px,8.5px 4.2px,4px 1px,3.8px 1.8px,6px 1px;background-repeat:no-repeat;box-shadow:inset 0 0 0 0.7px #d9d9d9"></div>
<div style="left:895.16px;top:4.2px;width:11px;height:36px;background-color:#f3f3f3;background-image:linear-gradient(#5a5a5a,#5a5a5a),linear-gradient(#c9c9c9,#c9c9c9),linear-gradient(#cfcfcf,#cfcfcf),linear-gradient(#6a6a6a,#6a6a6a),linear-gradient(#bdbdbd,#bdbdbd),linear-gradient(#b4b4b4,#b4b4b4),linear-gradient(#8a8a8a,#8a8a8a),linear-gradient(#a0a0a0,#a0a0a0),linear-gradient(#d8ca88,#d8ca88),linear-gradient(#dcdce4,#dcdce4);background-position:1.5px 33.4px,1.5px 30.6px,1.5px 27.8px,1.5px 20.8px,6.3px 20.6px,4px 13.8px,1.5px 12.8px,3px 10.6px,3.8px 5.8px,1.5px 1.2px;background-size:8.5px 1.6px,7px 1px,8px 1px,4.8px 4.8px,3.7px 5px,3.5px 2px,8.5px 4.2px,4px 1px,3.8px 1.8px,6px 1px;background-repeat:no-repeat;box-shadow:inset 0 0 0 0.7px #d9d9d9"></div>
<div style="left:907.58px;top:4.2px;width:11px;height:36px;background-color:#f3f3f3;background-image:linear-gradient(#5a5a5a,#5a5a5a),linear-gradient(#c9c9c9,#c9c9c9),linear-gradient(#cfcfcf,#cfcfcf),linear-gradient(#6a6a6a,#6a6a6a),linear-gradient(#bdbdbd,#bdbdbd),linear-gradient(#b4b4b4,#b4b4b4),linear-gradient(#8a8a8a,#8a8a8a),linear-gradient(#a0a0a0,#a0a0a0),linear-gradient(#d8ca88,#d8ca88),linear-gradient(#dcdce4,#dcdce4);background-position:1.5px 33.4px,1.5px 30.6px,1.5px 27.8px,1.5px 20.8px,6.3px 20.6px,4px 13.8px,1.5px 12.8px,3px 10.6px,3.8px 5.8px,1.5px 1.2px;background-size:8.5px 1.6px,7px 1px,8px 1px,4.8px 4.8px,3.7px 5px,3.5px 2px,8.5px 4.2px,4px 1px,3.8px 1.8px,6px 1px;background-repeat:no-repeat;box-shadow:inset 0 0 0 0.7px #d9d9d9"></div>
<div style="left:920.00px;top:4.2px;width:11px;height:36px;background-color:#f3f3f3;background-image:linear-gradient(#5a5a5a,#5a5a5a),linear-gradient(#c9c9c9,#c9c9c9),linear-gradient(#cfcfcf,#cfcfcf),linear-gradient(#6a6a6a,#6a6a6a),linear-gradient(#bdbdbd,#bdbdbd),linear-gradient(#b4b4b4,#b4b4b4),linear-gradient(#8a8a8a,#8a8a8a),linear-gradient(#a0a0a0,#a0a0a0),linear-gradient(#d8ca88,#d8ca88),linear-gradient(#dcdce4,#dcdce4);background-position:1.5px 33.4px,1.5px 30.6px,1.5px 27.8px,1.5px 20.8px,6.3px 20.6px,4px 13.8px,1.5px 12.8px,3px 10.6px,3.8px 5.8px,1.5px 1.2px;background-size:8.5px 1.6px,7px 1px,8px 1px,4.8px 4.8px,3.7px 5px,3.5px 2px,8.5px 4.2px,4px 1px,3.8px 1.8px,6px 1px;background-repeat:no-repeat;box-shadow:inset 0 0 0 0.7px #d9d9d9"></div>
<div style="left:932.42px;top:4.2px;width:11px;height:36px;background-color:#f3f3f3;background-image:linear-gradient(#5a5a5a,#5a5a5a),linear-gradient(#c9c9c9,#c9c9c9),linear-gradient(#cfcfcf,#cfcfcf),linear-gradient(#6a6a6a,#6a6a6a),linear-gradient(#bdbdbd,#bdbdbd),linear-gradient(#b4b4b4,#b4b4b4),linear-gradient(#8a8a8a,#8a8a8a),linear-gradient(#a0a0a0,#a0a0a0),linear-gradient(#d8ca88,#d8ca88),linear-gradient(#dcdce4,#dcdce4);background-position:1.5px 33.4px,1.5px 30.6px,1.5px 27.8px,1.5px 20.8px,6.3px 20.6px,4px 13.8px,1.5px 12.8px,3px 10.6px,3.8px 5.8px,1.5px 1.2px;background-size:8.5px 1.6px,7px 1px,8px 1px,4.8px 4.8px,3.7px 5px,3.5px 2px,8.5px 4.2px,4px 1px,3.8px 1.8px,6px 1px;background-repeat:no-repeat;box-shadow:inset 0 0 0 0.7px #d9d9d9"></div>
<div style="left:944.84px;top:4.2px;width:11px;height:36px;background-color:#f3f3f3;background-image:linear-gradient(#5a5a5a,#5a5a5a),linear-gradient(#c9c9c9,#c9c9c9),linear-gradient(#cfcfcf,#cfcfcf),linear-gradient(#6a6a6a,#6a6a6a),linear-gradient(#bdbdbd,#bdbdbd),linear-gradient(#b4b4b4,#b4b4b4),linear-gradient(#8a8a8a,#8a8a8a),linear-gradient(#a0a0a0,#a0a0a0),linear-gradient(#d8ca88,#d8ca88),linear-gradient(#dcdce4,#dcdce4);background-position:1.5px 33.4px,1.5px 30.6px,1.5px 27.8px,1.5px 20.8px,6.3px 20.6px,4px 13.8px,1.5px 12.8px,3px 10.6px,3.8px 5.8px,1.5px 1.2px;background-size:8.5px 1.6px,7px 1px,8px 1px,4.8px 4.8px,3.7px 5px,3.5px 2px,8.5px 4.2px,4px 1px,3.8px 1.8px,6px 1px;background-repeat:no-repeat;box-shadow:inset 0 0 0 0.7px #d9d9d9"></div>
<div style="left:957.26px;top:4.2px;width:11px;height:36px;background-color:#f3f3f3;background-image:linear-gradient(#5a5a5a,#5a5a5a),linear-gradient(#c9c9c9,#c9c9c9),linear-gradient(#cfcfcf,#cfcfcf),linear-gradient(#6a6a6a,#6a6a6a),linear-gradient(#bdbdbd,#bdbdbd),linear-gradient(#b4b4b4,#b4b4b4),linear-gradient(#8a8a8a,#8a8a8a),linear-gradient(#a0a0a0,#a0a0a0),linear-gradient(#d8ca88,#d8ca88),linear-gradient(#dcdce4,#dcdce4);background-position:1.5px 33.4px,1.5px 30.6px,1.5px 27.8px,1.5px 20.8px,6.3px 20.6px,4px 13.8px,1.5px 12.8px,3px 10.6px,3.8px 5.8px,1.5px 1.2px;background-size:8.5px 1.6px,7px 1px,8px 1px,4.8px 4.8px,3.7px 5px,3.5px 2px,8.5px 4.2px,4px 1px,3.8px 1.8px,6px 1px;background-repeat:no-repeat;box-shadow:inset 0 0 0 0.7px #d9d9d9"></div>
<div style="left:969.68px;top:4.2px;width:11px;height:36px;background-color:#f3f3f3;background-image:linear-gradient(#5a5a5a,#5a5a5a),linear-gradient(#c9c9c9,#c9c9c9),linear-gradient(#cfcfcf,#cfcfcf),linear-gradient(#6a6a6a,#6a6a6a),linear-gradient(#bdbdbd,#bdbdbd),linear-gradient(#b4b4b4,#b4b4b4),linear-gradient(#8a8a8a,#8a8a8a),linear-gradient(#a0a0a0,#a0a0a0),linear-gradient(#d8ca88,#d8ca88),linear-gradient(#dcdce4,#dcdce4);background-position:1.5px 33.4px,1.5px 30.6px,1.5px 27.8px,1.5px 20.8px,6.3px 20.6px,4px 13.8px,1.5px 12.8px,3px 10.6px,3.8px 5.8px,1.5px 1.2px;background-size:8.5px 1.6px,7px 1px,8px 1px,4.8px 4.8px,3.7px 5px,3.5px 2px,8.5px 4.2px,4px 1px,3.8px 1.8px,6px 1px;background-repeat:no-repeat;box-shadow:inset 0 0 0 0.7px #d9d9d9"></div>
<div style="left:982.10px;top:4.2px;width:11px;height:36px;background-color:#f3f3f3;background-image:linear-gradient(#5a5a5a,#5a5a5a),linear-gradient(#c9c9c9,#c9c9c9),linear-gradient(#cfcfcf,#cfcfcf),linear-gradient(#6a6a6a,#6a6a6a),linear-gradient(#bdbdbd,#bdbdbd),linear-gradient(#b4b4b4,#b4b4b4),linear-gradient(#8a8a8a,#8a8a8a),linear-gradient(#a0a0a0,#a0a0a0),linear-gradient(#d8ca88,#d8ca88),linear-gradient(#dcdce4,#dcdce4);background-position:1.5px 33.4px,1.5px 30.6px,1.5px 27.8px,1.5px 20.8px,6.3px 20.6px,4px 13.8px,1.5px 12.8px,3px 10.6px,3.8px 5.8px,1.5px 1.2px;background-size:8.5px 1.6px,7px 1px,8px 1px,4.8px 4.8px,3.7px 5px,3.5px 2px,8.5px 4.2px,4px 1px,3.8px 1.8px,6px 1px;background-repeat:no-repeat;box-shadow:inset 0 0 0 0.7px #d9d9d9"></div>
<div style="left:994.52px;top:4.2px;width:11px;height:36px;background-color:#f3f3f3;background-image:linear-gradient(#5a5a5a,#5a5a5a),linear-gradient(#c9c9c9,#c9c9c9),linear-gradient(#cfcfcf,#cfcfcf),linear-gradient(#6a6a6a,#6a6a6a),linear-gradient(#bdbdbd,#bdbdbd),linear-gradient(#b4b4b4,#b4b4b4),linear-gradient(#8a8a8a,#8a8a8a),linear-gradient(#a0a0a0,#a0a0a0),linear-gradient(#d8ca88,#d8ca88),linear-gradient(#dcdce4,#dcdce4);background-position:1.5px 33.4px,1.5px 30.6px,1.5px 27.8px,1.5px 20.8px,6.3px 20.6px,4px 13.8px,1.5px 12.8px,3px 10.6px,3.8px 5.8px,1.5px 1.2px;background-size:8.5px 1.6px,7px 1px,8px 1px,4.8px 4.8px,3.7px 5px,3.5px 2px,8.5px 4.2px,4px 1px,3.8px 1.8px,6px 1px;background-repeat:no-repeat;box-shadow:inset 0 0 0 0.7px #d9d9d9"></div>
<div style="left:1006.94px;top:4.2px;width:11px;height:36px;background-color:#f3f3f3;background-image:linear-gradient(#5a5a5a,#5a5a5a),linear-gradient(#c9c9c9,#c9c9c9),linear-gradient(#cfcfcf,#cfcfcf),linear-gradient(#6a6a6a,#6a6a6a),linear-gradient(#bdbdbd,#bdbdbd),linear-gradient(#b4b4b4,#b4b4b4),linear-gradient(#8a8a8a,#8a8a8a),linear-gradient(#a0a0a0,#a0a0a0),linear-gradient(#d8ca88,#d8ca88),linear-gradient(#dcdce4,#dcdce4);background-position:1.5px 33.4px,1.5px 30.6px,1.5px 27.8px,1.5px 20.8px,6.3px 20.6px,4px 13.8px,1.5px 12.8px,3px 10.6px,3.8px 5.8px,1.5px 1.2px;background-size:8.5px 1.6px,7px 1px,8px 1px,4.8px 4.8px,3.7px 5px,3.5px 2px,8.5px 4.2px,4px 1px,3.8px 1.8px,6px 1px;background-repeat:no-repeat;box-shadow:inset 0 0 0 0.7px #d9d9d9"></div>
<div style="left:1019.36px;top:4.2px;width:11px;height:36px;background-color:#f3f3f3;background-image:linear-gradient(#5a5a5a,#5a5a5a),linear-gradient(#c9c9c9,#c9c9c9),linear-gradient(#cfcfcf,#cfcfcf),linear-gradient(#6a6a6a,#6a6a6a),linear-gradient(#bdbdbd,#bdbdbd),linear-gradient(#b4b4b4,#b4b4b4),linear-gradient(#8a8a8a,#8a8a8a),linear-gradient(#a0a0a0,#a0a0a0),linear-gradient(#d8ca88,#d8ca88),linear-gradient(#dcdce4,#dcdce4);background-position:1.5px 33.4px,1.5px 30.6px,1.5px 27.8px,1.5px 20.8px,6.3px 20.6px,4px 13.8px,1.5px 12.8px,3px 10.6px,3.8px 5.8px,1.5px 1.2px;background-size:8.5px 1.6px,7px 1px,8px 1px,4.8px 4.8px,3.7px 5px,3.5px 2px,8.5px 4.2px,4px 1px,3.8px 1.8px,6px 1px;background-repeat:no-repeat;box-shadow:inset 0 0 0 0.7px #d9d9d9"></div>
<div style="left:1031.78px;top:4.2px;width:11px;height:36px;background-color:#f3f3f3;background-image:linear-gradient(#5a5a5a,#5a5a5a),linear-gradient(#c9c9c9,#c9c9c9),linear-gradient(#cfcfcf,#cfcfcf),linear-gradient(#6a6a6a,#6a6a6a),linear-gradient(#bdbdbd,#bdbdbd),linear-gradient(#b4b4b4,#b4b4b4),linear-gradient(#8a8a8a,#8a8a8a),linear-gradient(#a0a0a0,#a0a0a0),linear-gradient(#d8ca88,#d8ca88),linear-gradient(#dcdce4,#dcdce4);background-position:1.5px 33.4px,1.5px 30.6px,1.5px 27.8px,1.5px 20.8px,6.3px 20.6px,4px 13.8px,1.5px 12.8px,3px 10.6px,3.8px 5.8px,1.5px 1.2px;background-size:8.5px 1.6px,7px 1px,8px 1px,4.8px 4.8px,3.7px 5px,3.5px 2px,8.5px 4.2px,4px 1px,3.8px 1.8px,6px 1px;background-repeat:no-repeat;box-shadow:inset 0 0 0 0.7px #d9d9d9"></div>
<div style="left:1044.20px;top:4.2px;width:11px;height:36px;background-color:#f3f3f3;background-image:linear-gradient(#5a5a5a,#5a5a5a),linear-gradient(#c9c9c9,#c9c9c9),linear-gradient(#cfcfcf,#cfcfcf),linear-gradient(#6a6a6a,#6a6a6a),linear-gradient(#bdbdbd,#bdbdbd),linear-gradient(#b4b4b4,#b4b4b4),linear-gradient(#8a8a8a,#8a8a8a),linear-gradient(#a0a0a0,#a0a0a0),linear-gradient(#d8ca88,#d8ca88),linear-gradient(#dcdce4,#dcdce4);background-position:1.5px 33.4px,1.5px 30.6px,1.5px 27.8px,1.5px 20.8px,6.3px 20.6px,4px 13.8px,1.5px 12.8px,3px 10.6px,3.8px 5.8px,1.5px 1.2px;background-size:8.5px 1.6px,7px 1px,8px 1px,4.8px 4.8px,3.7px 5px,3.5px 2px,8.5px 4.2px,4px 1px,3.8px 1.8px,6px 1px;background-repeat:no-repeat;box-shadow:inset 0 0 0 0.7px #d9d9d9"></div>
<div style="left:1056.62px;top:4.2px;width:11px;height:36px;background-color:#f3f3f3;background-image:linear-gradient(#5a5a5a,#5a5a5a),linear-gradient(#c9c9c9,#c9c9c9),linear-gradient(#cfcfcf,#cfcfcf),linear-gradient(#6a6a6a,#6a6a6a),linear-gradient(#bdbdbd,#bdbdbd),linear-gradient(#b4b4b4,#b4b4b4),linear-gradient(#8a8a8a,#8a8a8a),linear-gradient(#a0a0a0,#a0a0a0),linear-gradient(#d8ca88,#d8ca88),linear-gradient(#dcdce4,#dcdce4);background-position:1.5px 33.4px,1.5px 30.6px,1.5px 27.8px,1.5px 20.8px,6.3px 20.6px,4px 13.8px,1.5px 12.8px,3px 10.6px,3.8px 5.8px,1.5px 1.2px;background-size:8.5px 1.6px,7px 1px,8px 1px,4.8px 4.8px,3.7px 5px,3.5px 2px,8.5px 4.2px,4px 1px,3.8px 1.8px,6px 1px;background-repeat:no-repeat;box-shadow:inset 0 0 0 0.7px #d9d9d9"></div>
<div style="left:1069.04px;top:4.2px;width:11px;height:36px;background-color:#f3f3f3;background-image:linear-gradient(#5a5a5a,#5a5a5a),linear-gradient(#c9c9c9,#c9c9c9),linear-gradient(#cfcfcf,#cfcfcf),linear-gradient(#6a6a6a,#6a6a6a),linear-gradient(#bdbdbd,#bdbdbd),linear-gradient(#b4b4b4,#b4b4b4),linear-gradient(#8a8a8a,#8a8a8a),linear-gradient(#a0a0a0,#a0a0a0),linear-gradient(#d8ca88,#d8ca88),linear-gradient(#dcdce4,#dcdce4);background-position:1.5px 33.4px,1.5px 30.6px,1.5px 27.8px,1.5px 20.8px,6.3px 20.6px,4px 13.8px,1.5px 12.8px,3px 10.6px,3.8px 5.8px,1.5px 1.2px;background-size:8.5px 1.6px,7px 1px,8px 1px,4.8px 4.8px,3.7px 5px,3.5px 2px,8.5px 4.2px,4px 1px,3.8px 1.8px,6px 1px;background-repeat:no-repeat;box-shadow:inset 0 0 0 0.7px #d9d9d9"></div>
<div style="left:1081.46px;top:4.2px;width:11px;height:36px;background-color:#f3f3f3;background-image:linear-gradient(#5a5a5a,#5a5a5a),linear-gradient(#c9c9c9,#c9c9c9),linear-gradient(#cfcfcf,#cfcfcf),linear-gradient(#6a6a6a,#6a6a6a),linear-gradient(#bdbdbd,#bdbdbd),linear-gradient(#b4b4b4,#b4b4b4),linear-gradient(#8a8a8a,#8a8a8a),linear-gradient(#a0a0a0,#a0a0a0),linear-gradient(#d8ca88,#d8ca88),linear-gradient(#dcdce4,#dcdce4);background-position:1.5px 33.4px,1.5px 30.6px,1.5px 27.8px,1.5px 20.8px,6.3px 20.6px,4px 13.8px,1.5px 12.8px,3px 10.6px,3.8px 5.8px,1.5px 1.2px;background-size:8.5px 1.6px,7px 1px,8px 1px,4.8px 4.8px,3.7px 5px,3.5px 2px,8.5px 4.2px,4px 1px,3.8px 1.8px,6px 1px;background-repeat:no-repeat;box-shadow:inset 0 0 0 0.7px #d9d9d9"></div>
<div style="left:1093.88px;top:4.2px;width:11px;height:36px;background-color:#f3f3f3;background-image:linear-gradient(#5a5a5a,#5a5a5a),linear-gradient(#c9c9c9,#c9c9c9),linear-gradient(#cfcfcf,#cfcfcf),linear-gradient(#6a6a6a,#6a6a6a),linear-gradient(#bdbdbd,#bdbdbd),linear-gradient(#b4b4b4,#b4b4b4),linear-gradient(#8a8a8a,#8a8a8a),linear-gradient(#a0a0a0,#a0a0a0),linear-gradient(#d8ca88,#d8ca88),linear-gradient(#dcdce4,#dcdce4);background-position:1.5px 33.4px,1.5px 30.6px,1.5px 27.8px,1.5px 20.8px,6.3px 20.6px,4px 13.8px,1.5px 12.8px,3px 10.6px,3.8px 5.8px,1.5px 1.2px;background-size:8.5px 1.6px,7px 1px,8px 1px,4.8px 4.8px,3.7px 5px,3.5px 2px,8.5px 4.2px,4px 1px,3.8px 1.8px,6px 1px;background-repeat:no-repeat;box-shadow:inset 0 0 0 0.7px #d9d9d9"></div>
<div style="left:1106.30px;top:4.2px;width:11px;height:36px;background-color:#f3f3f3;background-image:linear-gradient(#5a5a5a,#5a5a5a),linear-gradient(#c9c9c9,#c9c9c9),linear-gradient(#cfcfcf,#cfcfcf),linear-gradient(#6a6a6a,#6a6a6a),linear-gradient(#bdbdbd,#bdbdbd),linear-gradient(#b4b4b4,#b4b4b4),linear-gradient(#8a8a8a,#8a8a8a),linear-gradient(#a0a0a0,#a0a0a0),linear-gradient(#d8ca88,#d8ca88),linear-gradient(#dcdce4,#dcdce4);background-position:1.5px 33.4px,1.5px 30.6px,1.5px 27.8px,1.5px 20.8px,6.3px 20.6px,4px 13.8px,1.5px 12.8px,3px 10.6px,3.8px 5.8px,1.5px 1.2px;background-size:8.5px 1.6px,7px 1px,8px 1px,4.8px 4.8px,3.7px 5px,3.5px 2px,8.5px 4.2px,4px 1px,3.8px 1.8px,6px 1px;background-repeat:no-repeat;box-shadow:inset 0 0 0 0.7px #d9d9d9"></div>
<div style="left:1118.72px;top:4.2px;width:11px;height:36px;background-color:#f3f3f3;background-image:linear-gradient(#5a5a5a,#5a5a5a),linear-gradient(#c9c9c9,#c9c9c9),linear-gradient(#cfcfcf,#cfcfcf),linear-gradient(#6a6a6a,#6a6a6a),linear-gradient(#bdbdbd,#bdbdbd),linear-gradient(#b4b4b4,#b4b4b4),linear-gradient(#8a8a8a,#8a8a8a),linear-gradient(#a0a0a0,#a0a0a0),linear-gradient(#d8ca88,#d8ca88),linear-gradient(#dcdce4,#dcdce4);background-position:1.5px 33.4px,1.5px 30.6px,1.5px 27.8px,1.5px 20.8px,6.3px 20.6px,4px 13.8px,1.5px 12.8px,3px 10.6px,3.8px 5.8px,1.5px 1.2px;background-size:8.5px 1.6px,7px 1px,8px 1px,4.8px 4.8px,3.7px 5px,3.5px 2px,8.5px 4.2px,4px 1px,3.8px 1.8px,6px 1px;background-repeat:no-repeat;box-shadow:inset 0 0 0 0.7px #d9d9d9"></div>
<div style="left:1131.14px;top:4.2px;width:11px;height:36px;background-color:#f3f3f3;background-image:linear-gradient(#5a5a5a,#5a5a5a),linear-gradient(#c9c9c9,#c9c9c9),linear-gradient(#cfcfcf,#cfcfcf),linear-gradient(#6a6a6a,#6a6a6a),linear-gradient(#bdbdbd,#bdbdbd),linear-gradient(#b4b4b4,#b4b4b4),linear-gradient(#8a8a8a,#8a8a8a),linear-gradient(#a0a0a0,#a0a0a0),linear-gradient(#d8ca88,#d8ca88),linear-gradient(#dcdce4,#dcdce4);background-position:1.5px 33.4px,1.5px 30.6px,1.5px 27.8px,1.5px 20.8px,6.3px 20.6px,4px 13.8px,1.5px 12.8px,3px 10.6px,3.8px 5.8px,1.5px 1.2px;background-size:8.5px 1.6px,7px 1px,8px 1px,4.8px 4.8px,3.7px 5px,3.5px 2px,8.5px 4.2px,4px 1px,3.8px 1.8px,6px 1px;background-repeat:no-repeat;box-shadow:inset 0 0 0 0.7px #d9d9d9"></div>
<div style="left:1143.56px;top:4.2px;width:11px;height:36px;background-color:#f3f3f3;background-image:linear-gradient(#5a5a5a,#5a5a5a),linear-gradient(#c9c9c9,#c9c9c9),linear-gradient(#cfcfcf,#cfcfcf),linear-gradient(#6a6a6a,#6a6a6a),linear-gradient(#bdbdbd,#bdbdbd),linear-gradient(#b4b4b4,#b4b4b4),linear-gradient(#8a8a8a,#8a8a8a),linear-gradient(#a0a0a0,#a0a0a0),linear-gradient(#d8ca88,#d8ca88),linear-gradient(#dcdce4,#dcdce4);background-position:1.5px 33.4px,1.5px 30.6px,1.5px 27.8px,1.5px 20.8px,6.3px 20.6px,4px 13.8px,1.5px 12.8px,3px 10.6px,3.8px 5.8px,1.5px 1.2px;background-size:8.5px 1.6px,7px 1px,8px 1px,4.8px 4.8px,3.7px 5px,3.5px 2px,8.5px 4.2px,4px 1px,3.8px 1.8px,6px 1px;background-repeat:no-repeat;box-shadow:inset 0 0 0 0.7px #d9d9d9"></div>
<div style="left:1155.98px;top:4.2px;width:11px;height:36px;background-color:#f3f3f3;background-image:linear-gradient(#5a5a5a,#5a5a5a),linear-gradient(#c9c9c9,#c9c9c9),linear-gradient(#cfcfcf,#cfcfcf),linear-gradient(#6a6a6a,#6a6a6a),linear-gradient(#bdbdbd,#bdbdbd),linear-gradient(#b4b4b4,#b4b4b4),linear-gradient(#8a8a8a,#8a8a8a),linear-gradient(#a0a0a0,#a0a0a0),linear-gradient(#d8ca88,#d8ca88),linear-gradient(#dcdce4,#dcdce4);background-position:1.5px 33.4px,1.5px 30.6px,1.5px 27.8px,1.5px 20.8px,6.3px 20.6px,4px 13.8px,1.5px 12.8px,3px 10.6px,3.8px 5.8px,1.5px 1.2px;background-size:8.5px 1.6px,7px 1px,8px 1px,4.8px 4.8px,3.7px 5px,3.5px 2px,8.5px 4.2px,4px 1px,3.8px 1.8px,6px 1px;background-repeat:no-repeat;box-shadow:inset 0 0 0 0.7px #d9d9d9"></div>
<div style="left:1168.40px;top:4.2px;width:11px;height:36px;background-color:#f3f3f3;background-image:linear-gradient(#5a5a5a,#5a5a5a),linear-gradient(#c9c9c9,#c9c9c9),linear-gradient(#cfcfcf,#cfcfcf),linear-gradient(#6a6a6a,#6a6a6a),linear-gradient(#bdbdbd,#bdbdbd),linear-gradient(#b4b4b4,#b4b4b4),linear-gradient(#8a8a8a,#8a8a8a),linear-gradient(#a0a0a0,#a0a0a0),linear-gradient(#d8ca88,#d8ca88),linear-gradient(#dcdce4,#dcdce4);background-position:1.5px 33.4px,1.5px 30.6px,1.5px 27.8px,1.5px 20.8px,6.3px 20.6px,4px 13.8px,1.5px 12.8px,3px 10.6px,3.8px 5.8px,1.5px 1.2px;background-size:8.5px 1.6px,7px 1px,8px 1px,4.8px 4.8px,3.7px 5px,3.5px 2px,8.5px 4.2px,4px 1px,3.8px 1.8px,6px 1px;background-repeat:no-repeat;box-shadow:inset 0 0 0 0.7px #d9d9d9"></div>
</div>
<div style="left:364.50px;top:99.50px;width:3.20px;height:16.50px;background:#8b8b8b;"></div>
<div style="left:416.00px;top:99.50px;width:3.20px;height:16.50px;background:#8b8b8b;"></div>
<div style="left:51.00px;top:220.00px;width:1178.00px;height:1.60px;background:#a9a9a9;"></div>
<div style="left:74.10px;top:221.50px;width:1.00px;height:115.50px;background:#ededed;"></div>
<div style="left:157.20px;top:221.50px;width:1.00px;height:115.50px;background:#ededed;"></div>
<div style="left:240.30px;top:221.50px;width:1.00px;height:115.50px;background:#ededed;"></div>
<div style="left:323.40px;top:221.50px;width:1.00px;height:115.50px;background:#ededed;"></div>
<div style="left:406.50px;top:221.50px;width:1.00px;height:115.50px;background:#ededed;"></div>
<div style="left:489.60px;top:221.50px;width:1.00px;height:115.50px;background:#ededed;"></div>
<div style="left:572.70px;top:221.50px;width:1.00px;height:115.50px;background:#ededed;"></div>
<div style="left:655.80px;top:221.50px;width:1.00px;height:115.50px;background:#ededed;"></div>
<div style="left:738.90px;top:221.50px;width:1.00px;height:115.50px;background:#ededed;"></div>
<div style="left:822.00px;top:221.50px;width:1.00px;height:115.50px;background:#ededed;"></div>
<div style="left:905.10px;top:221.50px;width:1.00px;height:115.50px;background:#ededed;"></div>
<div style="left:988.20px;top:221.50px;width:1.00px;height:115.50px;background:#ededed;"></div>
<div style="left:1071.30px;top:221.50px;width:1.00px;height:115.50px;background:#ededed;"></div>
<div style="left:1154.40px;top:221.50px;width:1.00px;height:115.50px;background:#ededed;"></div>
<div class="t" style="right:1126.30px;top:223.39px;font-size:10.6px;line-height:10.6px;color:#262626;text-align:right;-webkit-text-stroke:0.2px #262626;">1800 ms</div>
<div class="t" style="right:1043.20px;top:223.39px;font-size:10.6px;line-height:10.6px;color:#262626;text-align:right;-webkit-text-stroke:0.2px #262626;">1820 ms</div>
<div class="t" style="right:960.10px;top:223.39px;font-size:10.6px;line-height:10.6px;color:#262626;text-align:right;-webkit-text-stroke:0.2px #262626;">1840 ms</div>
<div class="t" style="right:877.00px;top:223.39px;font-size:10.6px;line-height:10.6px;color:#262626;text-align:right;-webkit-text-stroke:0.2px #262626;">1860 ms</div>
<div class="t" style="right:793.90px;top:223.39px;font-size:10.6px;line-height:10.6px;color:#262626;text-align:right;-webkit-text-stroke:0.2px #262626;">1880 ms</div>
<div class="t" style="right:710.80px;top:223.39px;font-size:10.6px;line-height:10.6px;color:#262626;text-align:right;-webkit-text-stroke:0.2px #262626;">1900 ms</div>
<div class="t" style="right:627.70px;top:223.39px;font-size:10.6px;line-height:10.6px;color:#262626;text-align:right;-webkit-text-stroke:0.2px #262626;">1920 ms</div>
<div class="t" style="right:544.60px;top:223.39px;font-size:10.6px;line-height:10.6px;color:#262626;text-align:right;-webkit-text-stroke:0.2px #262626;">1940 ms</div>
<div class="t" style="right:461.50px;top:223.39px;font-size:10.6px;line-height:10.6px;color:#262626;text-align:right;-webkit-text-stroke:0.2px #262626;">1960 ms</div>
<div class="t" style="right:378.40px;top:223.39px;font-size:10.6px;line-height:10.6px;color:#262626;text-align:right;-webkit-text-stroke:0.2px #262626;">1980 ms</div>
<div class="t" style="right:295.30px;top:223.39px;font-size:10.6px;line-height:10.6px;color:#262626;text-align:right;-webkit-text-stroke:0.2px #262626;">2000 ms</div>
<div class="t" style="right:212.20px;top:223.39px;font-size:10.6px;line-height:10.6px;color:#262626;text-align:right;-webkit-text-stroke:0.2px #262626;">2020 ms</div>
<div class="t" style="right:129.10px;top:223.39px;font-size:10.6px;line-height:10.6px;color:#262626;text-align:right;-webkit-text-stroke:0.2px #262626;">2040 ms</div>
<div class="t" style="left:1193.50px;top:223.39px;font-size:10.6px;line-height:10.6px;color:#262626;-webkit-text-stroke:0.2px #262626;">2060</div>
<div style="left:1218.00px;top:221.50px;width:11.00px;height:430.50px;background:#ffffff;"></div>
<div style="left:1219.6px;top:224.5px;width:7px;height:54px;border-radius:3.5px;background:#c3c3c3"></div>
<div style="left:52.00px;top:239.00px;width:1166.00px;height:13.00px;background:rgba(245,180,188,0.62);"></div>
<div class="t" style="left:610.50px;top:239.69px;font-size:10.6px;line-height:10.6px;color:#333;">1285.0 ms</div>
<div style="left:52.00px;top:253.80px;width:1166.00px;height:1.80px;background:#e4c55e;"></div>
<div style="left:1216.50px;top:250.00px;width:1.50px;height:5.60px;background:#e4c55e;"></div>
<div class="t" style="left:55.00px;top:256.07px;font-size:10.5px;line-height:10.5px;color:#d8d8d8;">Me</div>
<svg style="left:56.50px;top:257.50px" width="8" height="7" viewBox="0 0 8 7"><path d="M0.3 0.5H7.7L4.0 6.7Z" fill="#6e6e6e"/></svg>
<div class="t" style="left:68.20px;top:255.85px;font-size:11px;line-height:11px;color:#222;">Interactions</div>
<div style="left:52.00px;top:270.00px;width:1166.00px;height:13.60px;background:rgba(240,196,90,0.68);"></div>
<div style="left:53.60px;top:270.30px;width:50.00px;height:13.00px;background:rgba(255,255,255,0.72);"></div>
<div class="t" style="left:55.00px;top:271.88px;font-size:10.5px;line-height:10.5px;color:#c8c8c8;">Mo</div>
<svg style="left:65.50px;top:273.50px" width="8" height="7" viewBox="0 0 8 7"><path d="M0.3 0.5H7.7L4.0 6.7Z" fill="#6e6e6e"/></svg>
<div class="t" style="left:77.60px;top:271.65px;font-size:11px;line-height:11px;color:#222;">Input</div>
<div class="t" style="left:77.40px;top:304.65px;font-size:11px;line-height:11px;color:#222;">Animation</div>
<div style="left:51.00px;top:319.00px;width:1167.00px;height:1.00px;background:#cfcfcf;"></div>
<svg style="left:57.00px;top:326.00px" width="8" height="7" viewBox="0 0 8 7"><path d="M0.3 0.5H7.7L4.0 6.7Z" fill="#6e6e6e"/></svg>
<div class="t" style="left:68.20px;top:323.95px;font-size:11px;line-height:11px;color:#222;">User Timing</div>
<div class="b" style="left:224.00px;top:338.00px;width:85.40px;height:14.0px;background:hsla(49,88%,50%,0.7)"><span>Connec…pdate]</span></div>
<div class="b" style="left:324.00px;top:338.00px;width:42.25px;height:14.0px;background:hsla(50,100%,50%,0.7)"><span>Co…e]</span></div>
<div class="b" style="left:371.90px;top:338.00px;width:39.60px;height:14.0px;background:hsla(50,100%,50%,0.7)"><span>Co…e]</span></div>
<div class="b" style="left:416.60px;top:338.00px;width:53.65px;height:14.0px;background:hsla(50,100%,50%,0.7)"><span>Con…te]</span></div>
<div class="b" style="left:476.25px;top:338.00px;width:741.75px;height:14.0px;background:hsla(50,100%,50%,0.7)"><span>Connect(TweetContainer) [update]</span></div>
<div style="left:227.00px;top:353.60px;width:1.30px;height:14.0px;background:hsla(40,70%,50%,0.35)"></div>
<div style="left:231.00px;top:353.60px;width:1.00px;height:14.0px;background:hsla(40,70%,50%,0.35)"></div>
<div style="left:235.60px;top:353.60px;width:2.20px;height:14.0px;background:hsla(33,88%,50%,0.7)"></div>
<div class="b" style="left:243.00px;top:353.60px;width:60.00px;height:14.0px;background:#b0aa5e"><span>Conv…ate]</span></div>
<div style="left:327.50px;top:353.60px;width:6.90px;height:14.0px;background:hsla(33,88%,50%,0.7)"></div>
<div class="b" style="left:338.75px;top:353.60px;width:24.75px;height:14.0px;background:hsla(30,70%,50%,0.7)"><span>T…</span></div>
<div style="left:373.00px;top:353.60px;width:1.50px;height:14.0px;background:hsla(48,90%,50%,0.35)"></div>
<div style="left:376.00px;top:353.60px;width:4.00px;height:14.0px;background:hsla(33,88%,50%,0.7)"></div>
<div class="b" style="left:383.75px;top:353.60px;width:24.00px;height:14.0px;background:hsla(30,70%,50%,0.7)"><span>T…</span></div>
<div style="left:418.00px;top:353.60px;width:1.60px;height:14.0px;background:hsla(48,90%,50%,0.35)"></div>
<div style="left:423.00px;top:353.60px;width:1.00px;height:14.0px;background:hsla(40,70%,50%,0.35)"></div>
<div style="left:426.00px;top:353.60px;width:5.90px;height:14.0px;background:hsla(33,88%,50%,0.7)"></div>
<div class="b" style="left:438.75px;top:353.60px;width:28.75px;height:14.0px;background:hsla(30,70%,50%,0.7)"><span>T…]</span></div>
<div style="left:479.40px;top:353.60px;width:7.50px;height:14.0px;background:hsla(33,88%,50%,0.7)"></div>
<div class="b" style="left:502.00px;top:353.60px;width:716.00px;height:14.0px;background:hsla(30,70%,50%,0.7)"><span>TweetContainer [update]</span></div>
<div style="left:246.25px;top:369.20px;width:9.75px;height:14.0px;background:hsla(49,88%,50%,0.7)"></div>
<div style="left:258.50px;top:369.20px;width:8.75px;height:14.0px;background:hsla(53,82%,50%,0.7)"></div>
<div class="b" style="left:505.00px;top:369.20px;width:713.00px;height:14.0px;background:hsla(53,82%,50%,0.7)"><span>Tweet [update]</span></div>
<div style="left:261.25px;top:384.80px;width:3.15px;height:14.0px;background:hsla(50,76%,50%,0.7)"></div>
<div style="left:353.75px;top:384.80px;width:2.50px;height:14.0px;background:hsla(50,76%,50%,0.7)"></div>
<div style="left:400.00px;top:384.80px;width:2.50px;height:14.0px;background:hsla(50,76%,50%,0.7)"></div>
<div style="left:458.00px;top:384.80px;width:4.00px;height:14.0px;background:hsla(50,76%,50%,0.7)"></div>
<div style="left:506.00px;top:384.80px;width:1.60px;height:14.0px;background:hsla(40,70%,50%,0.35)"></div>
<div style="left:509.60px;top:384.80px;width:1.60px;height:14.0px;background:hsla(33,88%,50%,0.7)"></div>
<div class="b" style="left:512.50px;top:384.80px;width:28.10px;height:14.0px;background:hsla(53,82%,50%,0.7)"><span>T…]</span></div>
<div class="b" style="left:550.00px;top:384.80px;width:668.00px;height:14.0px;background:hsla(45,100%,50%,0.7)"><span>Connect(WithheldContentMaybeContainer) [update]</span></div>
<div style="left:552.75px;top:400.40px;width:3.15px;height:14.0px;background:hsla(33,88%,50%,0.7)"></div>
<div style="left:557.50px;top:400.40px;width:1.00px;height:14.0px;background:hsla(48,90%,50%,0.35)"></div>
<div style="left:560.00px;top:400.40px;width:1.00px;height:14.0px;background:hsla(48,90%,50%,0.35)"></div>
<div style="left:563.00px;top:400.40px;width:1.50px;height:14.0px;background:hsla(48,90%,50%,0.35)"></div>
<div class="b" style="left:568.50px;top:400.40px;width:649.50px;height:14.0px;background:hsla(38,94%,50%,0.7)"><span>WithheldContentMaybeContainer [update]</span></div>
<div style="left:571.25px;top:416.00px;width:5.65px;height:14.0px;background:hsla(50,76%,50%,0.7)"></div>
<div class="b" style="left:579.40px;top:416.00px;width:638.60px;height:14.0px;background:hsla(31,70%,50%,0.7)"><span>WithheldContentMaybe [update]</span></div>
<div style="left:582.50px;top:431.60px;width:1.70px;height:14.0px;background:hsla(48,90%,50%,0.35)"></div>
<div class="b" style="left:585.00px;top:431.60px;width:633.00px;height:14.0px;background:hsla(50,76%,50%,0.7)"><span>GridView [update]</span></div>
<div style="left:586.90px;top:447.20px;width:10.20px;height:14.0px;background:hsla(35,94%,50%,0.7)"></div>
<div class="b" style="left:601.25px;top:447.20px;width:616.75px;height:14.0px;background:hsla(35,94%,50%,0.7)"><span>View [update]</span></div>
<div style="left:606.25px;top:462.80px;width:3.75px;height:14.0px;background:hsla(35,94%,50%,0.7)"></div>
<div class="b" style="left:618.00px;top:462.80px;width:66.60px;height:14.0px;background:hsla(35,94%,50%,0.7)"><span>View …ate]</span></div>
<div class="b" style="left:691.90px;top:462.80px;width:526.10px;height:14.0px;background:hsla(35,94%,50%,0.7)"><span>View [update]</span></div>
<div style="left:620.00px;top:478.40px;width:1.50px;height:14.0px;background:hsla(33,88%,50%,0.7)"></div>
<div class="b" style="left:631.00px;top:478.40px;width:46.00px;height:14.0px;background:hsla(38,70%,50%,0.7)"><span>Lin…te]</span></div>
<div style="left:697.50px;top:478.40px;width:1.90px;height:14.0px;background:hsla(33,88%,50%,0.7)"></div>
<div class="b" style="left:707.40px;top:478.40px;width:233.90px;height:14.0px;background:hsla(35,94%,50%,0.7)"><span>View [update]</span></div>
<div class="b" style="left:944.00px;top:478.40px;width:274.00px;height:14.0px;background:hsla(50,100%,50%,0.7)"><span>ScribePropsContainer [update]</span></div>
<div style="left:639.20px;top:494.00px;width:6.50px;height:14.0px;background:hsla(33,70%,50%,0.7)"></div>
<div style="left:656.70px;top:494.00px;width:8.30px;height:14.0px;background:hsla(50,76%,50%,0.7)"></div>
<div style="left:710.00px;top:494.00px;width:3.00px;height:14.0px;background:hsla(33,88%,50%,0.7)"></div>
<div class="b" style="left:720.40px;top:494.00px;width:98.50px;height:14.0px;background:hsla(35,94%,50%,0.7)"><span>View [update]</span></div>
<div class="b" style="left:824.20px;top:494.00px;width:109.60px;height:14.0px;background:hsla(35,94%,50%,0.7)"><span>View [update]</span></div>
<div style="left:948.00px;top:494.00px;width:4.00px;height:14.0px;background:hsla(33,70%,50%,0.7)"></div>
<div class="b" style="left:954.70px;top:494.00px;width:263.30px;height:14.0px;background:hsla(37,94%,50%,0.7)"><span>Connect(TweetActionsBarContainer) [update]</span></div>
<div style="left:660.20px;top:509.60px;width:2.30px;height:14.0px;background:hsla(45,94%,50%,0.7)"></div>
<div style="left:724.00px;top:509.60px;width:2.00px;height:14.0px;background:hsla(33,88%,50%,0.7)"></div>
<div class="b" style="left:733.00px;top:509.60px;width:58.10px;height:14.0px;background:hsla(38,70%,50%,0.7)"><span>Link …ate]</span></div>
<div style="left:800.00px;top:509.60px;width:6.70px;height:14.0px;background:hsla(45,94%,50%,0.7)"></div>
<div style="left:826.00px;top:509.60px;width:2.70px;height:14.0px;background:hsla(33,88%,50%,0.7)"></div>
<div class="b" style="left:839.80px;top:509.60px;width:89.00px;height:14.0px;background:hsla(33,70%,50%,0.7)"><span>TweetTe…pdate]</span></div>
<div style="left:957.40px;top:509.60px;width:4.10px;height:14.0px;background:hsla(33,70%,50%,0.7)"></div>
<div style="left:965.50px;top:509.60px;width:1.20px;height:14.0px;background:hsla(40,70%,50%,0.35)"></div>
<div style="left:969.00px;top:509.60px;width:9.00px;height:14.0px;background:hsla(50,76%,50%,0.7)"></div>
<div class="b" style="left:983.30px;top:509.60px;width:234.70px;height:14.0px;background:hsla(38,94%,50%,0.7)"><span>TweetActionsBarContainer [update]</span></div>
<div style="left:735.60px;top:525.20px;width:1.50px;height:14.0px;background:hsla(33,70%,50%,0.7)"></div>
<div class="b" style="left:745.00px;top:525.20px;width:36.70px;height:14.0px;background:hsla(38,70%,50%,0.7)"><span>Re…e]</span></div>
<div style="left:804.00px;top:525.20px;width:1.30px;height:14.0px;background:hsla(50,76%,50%,0.7)"></div>
<div class="b" style="left:844.20px;top:525.20px;width:22.40px;height:14.0px;background:hsla(27,76%,50%,0.7)"><span>T…</span></div>
<div class="b" style="left:869.30px;top:525.20px;width:55.10px;height:14.0px;background:hsla(45,94%,50%,0.7)"><span>AppT…te]</span></div>
<div style="left:986.60px;top:525.20px;width:14.60px;height:14.0px;background:hsla(45,94%,50%,0.7)"></div>
<div class="b" style="left:1002.00px;top:525.20px;width:216.00px;height:14.0px;background:hsla(35,94%,50%,0.7)"><span>View [update]</span></div>
<div class="b" style="left:748.20px;top:540.80px;width:22.80px;height:14.0px;background:hsla(45,94%,50%,0.7)"><span>R…</span></div>
<div style="left:872.00px;top:540.80px;width:6.40px;height:14.0px;background:hsla(50,76%,50%,0.7)"></div>
<div class="b" style="left:883.80px;top:540.80px;width:37.00px;height:14.0px;background:hsla(32,70%,50%,0.7)"><span>Te…e]</span></div>
<div style="left:1001.00px;top:540.80px;width:1.00px;height:14.0px;background:hsla(40,70%,50%,0.35)"></div>
<div class="b" style="left:1004.20px;top:540.80px;width:61.60px;height:14.0px;background:hsla(47,70%,50%,0.7)"><span>Reply…ate]</span></div>
<div class="b" style="left:1072.50px;top:540.80px;width:53.40px;height:14.0px;background:hsla(53,82%,50%,0.7)"><span>Retw…te]</span></div>
<div class="b" style="left:1127.60px;top:540.80px;width:90.40px;height:14.0px;background:hsla(32,70%,50%,0.7)"><span>LikeTwe…pdate]</span></div>
<div style="left:889.00px;top:556.40px;width:6.20px;height:14.0px;background:hsla(45,94%,50%,0.7)"></div>
<div style="left:906.00px;top:556.40px;width:5.80px;height:14.0px;background:hsla(47,94%,50%,0.7)"></div>
<div style="left:1006.20px;top:556.40px;width:2.80px;height:14.0px;background:hsla(33,70%,50%,0.7)"></div>
<div class="b" style="left:1019.00px;top:556.40px;width:44.80px;height:14.0px;background:hsla(45,94%,50%,0.7)"><span>Ico…te]</span></div>
<div style="left:1078.90px;top:556.40px;width:7.10px;height:14.0px;background:hsla(33,70%,50%,0.7)"></div>
<div class="b" style="left:1097.10px;top:556.40px;width:20.60px;height:14.0px;background:hsla(32,88%,50%,0.7)"><span>I…</span></div>
<div class="b" style="left:1128.50px;top:556.40px;width:29.20px;height:14.0px;background:hsla(47,94%,50%,0.7)"><span>Li…]</span></div>
<div class="b" style="left:1198.20px;top:556.40px;width:19.80px;height:14.0px;background:hsla(50,76%,50%,0.7)"><span>I…</span></div>
<div style="left:909.00px;top:572.00px;width:2.00px;height:14.0px;background:hsla(33,70%,50%,0.7)"></div>
<div style="left:1022.40px;top:572.00px;width:6.20px;height:14.0px;background:hsla(45,94%,50%,0.7)"></div>
<div style="left:1099.00px;top:572.00px;width:3.00px;height:14.0px;background:hsla(33,88%,50%,0.7)"></div>
<div style="left:1202.40px;top:572.00px;width:3.60px;height:14.0px;background:hsla(45,94%,50%,0.7)"></div>
<div style="left:74.10px;top:337.00px;width:1.00px;height:251.00px;background:rgba(0,0,0,0.085);"></div>
<div style="left:157.20px;top:337.00px;width:1.00px;height:251.00px;background:rgba(0,0,0,0.085);"></div>
<div style="left:240.30px;top:337.00px;width:1.00px;height:251.00px;background:rgba(0,0,0,0.085);"></div>
<div style="left:323.40px;top:337.00px;width:1.00px;height:251.00px;background:rgba(0,0,0,0.085);"></div>
<div style="left:406.50px;top:337.00px;width:1.00px;height:251.00px;background:rgba(0,0,0,0.085);"></div>
<div style="left:489.60px;top:337.00px;width:1.00px;height:251.00px;background:rgba(0,0,0,0.085);"></div>
<div style="left:572.70px;top:337.00px;width:1.00px;height:251.00px;background:rgba(0,0,0,0.085);"></div>
<div style="left:655.80px;top:337.00px;width:1.00px;height:251.00px;background:rgba(0,0,0,0.085);"></div>
<div style="left:738.90px;top:337.00px;width:1.00px;height:251.00px;background:rgba(0,0,0,0.085);"></div>
<div style="left:822.00px;top:337.00px;width:1.00px;height:251.00px;background:rgba(0,0,0,0.085);"></div>
<div style="left:905.10px;top:337.00px;width:1.00px;height:251.00px;background:rgba(0,0,0,0.085);"></div>
<div style="left:988.20px;top:337.00px;width:1.00px;height:251.00px;background:rgba(0,0,0,0.085);"></div>
<div style="left:1071.30px;top:337.00px;width:1.00px;height:251.00px;background:rgba(0,0,0,0.085);"></div>
<div style="left:1154.40px;top:337.00px;width:1.00px;height:251.00px;background:rgba(0,0,0,0.085);"></div>
<div style="left:289px;top:368.8px;width:223px;height:20.6px;background:#fff;box-shadow:0 1px 3px rgba(0,0,0,0.28)"></div>
<div class="t" style="left:296.80px;top:373.85px;font-size:11px;line-height:11px;color:#2b8c39;">14.56ms</div>
<div class="t" style="left:343.00px;top:373.76px;font-size:11.1px;line-height:11.1px;color:#333;">ConversationContainer [update]</div>
<div style="left:51.00px;top:588.40px;width:1167.00px;height:1.30px;background:#d6d6d6;"></div>
<svg style="left:57.00px;top:596.00px" width="8" height="7" viewBox="0 0 8 7"><path d="M0.3 0.5H7.7L4.0 6.7Z" fill="#6e6e6e"/></svg>
<div class="t" style="left:68.50px;top:593.85px;font-size:11px;line-height:11px;color:#222;">Main</div>
<div style="left:51.00px;top:607.00px;width:1167.00px;height:15.00px;background:#f0c25a;"></div>
<div style="left:51.00px;top:623.00px;width:1167.00px;height:14.40px;background:#f0c25a;"></div>
<div style="left:51.00px;top:622.00px;width:1167.00px;height:1.00px;background:#fbe7b0;"></div>
<div style="left:51.00px;top:638.00px;width:1167.00px;height:14.00px;background:#bcefe9;"></div>
<div style="left:51.00px;top:637.40px;width:1167.00px;height:0.60px;background:#e8f8f0;"></div>
<div style="left:74.10px;top:590.00px;width:1.00px;height:62.00px;background:rgba(0,0,0,0.1);"></div>
<div style="left:157.20px;top:590.00px;width:1.00px;height:62.00px;background:rgba(0,0,0,0.1);"></div>
<div style="left:240.30px;top:590.00px;width:1.00px;height:62.00px;background:rgba(0,0,0,0.1);"></div>
<div style="left:323.40px;top:590.00px;width:1.00px;height:62.00px;background:rgba(0,0,0,0.1);"></div>
<div style="left:406.50px;top:590.00px;width:1.00px;height:62.00px;background:rgba(0,0,0,0.1);"></div>
<div style="left:489.60px;top:590.00px;width:1.00px;height:62.00px;background:rgba(0,0,0,0.1);"></div>
<div style="left:572.70px;top:590.00px;width:1.00px;height:62.00px;background:rgba(0,0,0,0.1);"></div>
<div style="left:655.80px;top:590.00px;width:1.00px;height:62.00px;background:rgba(0,0,0,0.1);"></div>
<div style="left:738.90px;top:590.00px;width:1.00px;height:62.00px;background:rgba(0,0,0,0.1);"></div>
<div style="left:822.00px;top:590.00px;width:1.00px;height:62.00px;background:rgba(0,0,0,0.1);"></div>
<div style="left:905.10px;top:590.00px;width:1.00px;height:62.00px;background:rgba(0,0,0,0.1);"></div>
<div style="left:988.20px;top:590.00px;width:1.00px;height:62.00px;background:rgba(0,0,0,0.1);"></div>
<div style="left:1071.30px;top:590.00px;width:1.00px;height:62.00px;background:rgba(0,0,0,0.1);"></div>
<div style="left:1154.40px;top:590.00px;width:1.00px;height:62.00px;background:rgba(0,0,0,0.1);"></div>
<div class="t" style="left:55.60px;top:609.32px;font-size:10.8px;line-height:10.8px;color:#2a2a2a;-webkit-text-stroke:0.2px #2a2a2a;">Event (click)</div>
<div class="t" style="left:55.60px;top:624.82px;font-size:10.8px;line-height:10.8px;color:#2a2a2a;-webkit-text-stroke:0.2px #2a2a2a;">Function Call</div>
<div class="t" style="left:55.60px;top:640.02px;font-size:10.8px;line-height:10.8px;color:#2a3a3a;-webkit-text-stroke:0.2px #2a3a3a;">dispatchEvent</div>
<div style="left:51.00px;top:652.00px;width:1178.00px;height:1.00px;background:#bdbdbd;"></div>
<div style="left:51.00px;top:653.00px;width:1178.00px;height:24.50px;background:#f3f3f3;"></div>
<div style="left:51.00px;top:677.20px;width:1178.00px;height:1.00px;background:#d0d0d0;"></div>
<div style="left:56.7px;top:655.5px;width:55.8px;height:22px;background:#fff;border:1px solid #dedede;border-bottom:none;box-sizing:border-box"></div>
<div class="t" style="left:60.75px;top:659.95px;font-size:11px;line-height:11px;color:#222;">Summary</div>
<div class="t" style="left:118.00px;top:659.95px;font-size:11px;line-height:11px;color:#444;">Bottom-Up</div>
<div class="t" style="left:182.80px;top:659.95px;font-size:11px;line-height:11px;color:#444;">Call Tree</div>
<div class="t" style="left:235.30px;top:659.95px;font-size:11px;line-height:11px;color:#444;">Event Log</div>
<svg style="left:0;top:0" width="1280" height="755" viewBox="0 0 1280 755"><path d="M236.5 330H247.8 M258.5 330H269.8 M280.5 330H291.8 M302.5 330H313.8 M324.5 330H335.8 M346.5 330H357.8 M368.5 330H379.8 M390.5 330H401.8 M412.5 330H423.8 M434.5 330H445.8 M456.5 330H467.8 M478.5 330H489.8 M502 330H508.3A8 8 0 0 1 514.6 333.2 M217 338.6A8.6 8.6 0 0 1 225.6 330 M516.3 341.5V351.7 M516.3 363.8V374.0 M516.3 386.1V396.3 M516.3 408.3V418.5 M232.8 425.6H243.7 M254.5 425.6H265.4 M276.5 425.6H287.4 M299.1 425.6H310.0 M321.2 425.6H332.1 M343.0 425.6H353.9 M365.0 425.6H375.9 M387.0 425.6H397.9 M409.0 425.6H419.9 M431.0 425.6H441.9 M452.9 425.6H463.8 M475.1 425.6H486.0 M497.3 425.6H508.2 M217 349.5V359.6 M217 371.3V381.4 M217 393.5V403.6 M217 416.3V417A8.6 8.6 0 0 0 225.3 425.6" fill="none" stroke="#0f7616" stroke-width="5" stroke-linecap="round"/><circle cx="261.6" cy="480.5" r="6.6" fill="#0f7616"/><path d="M261.6 480.5L283.6 409.5" stroke="#0f7616" stroke-width="4"/><path d="M285.9 401.6L276.6 407.2L291.1 411.5Z" fill="#0f7616" stroke="#0f7616" stroke-width="1.4" stroke-linejoin="round"/></svg>
<div class="t" style="left:131.80px;top:501.36px;font-size:22.05px;line-height:22.05px;color:#0f7616;font-weight:700;-webkit-text-stroke:0.3px #0f7616;">Updates Prevented!</div>
</body></html>
